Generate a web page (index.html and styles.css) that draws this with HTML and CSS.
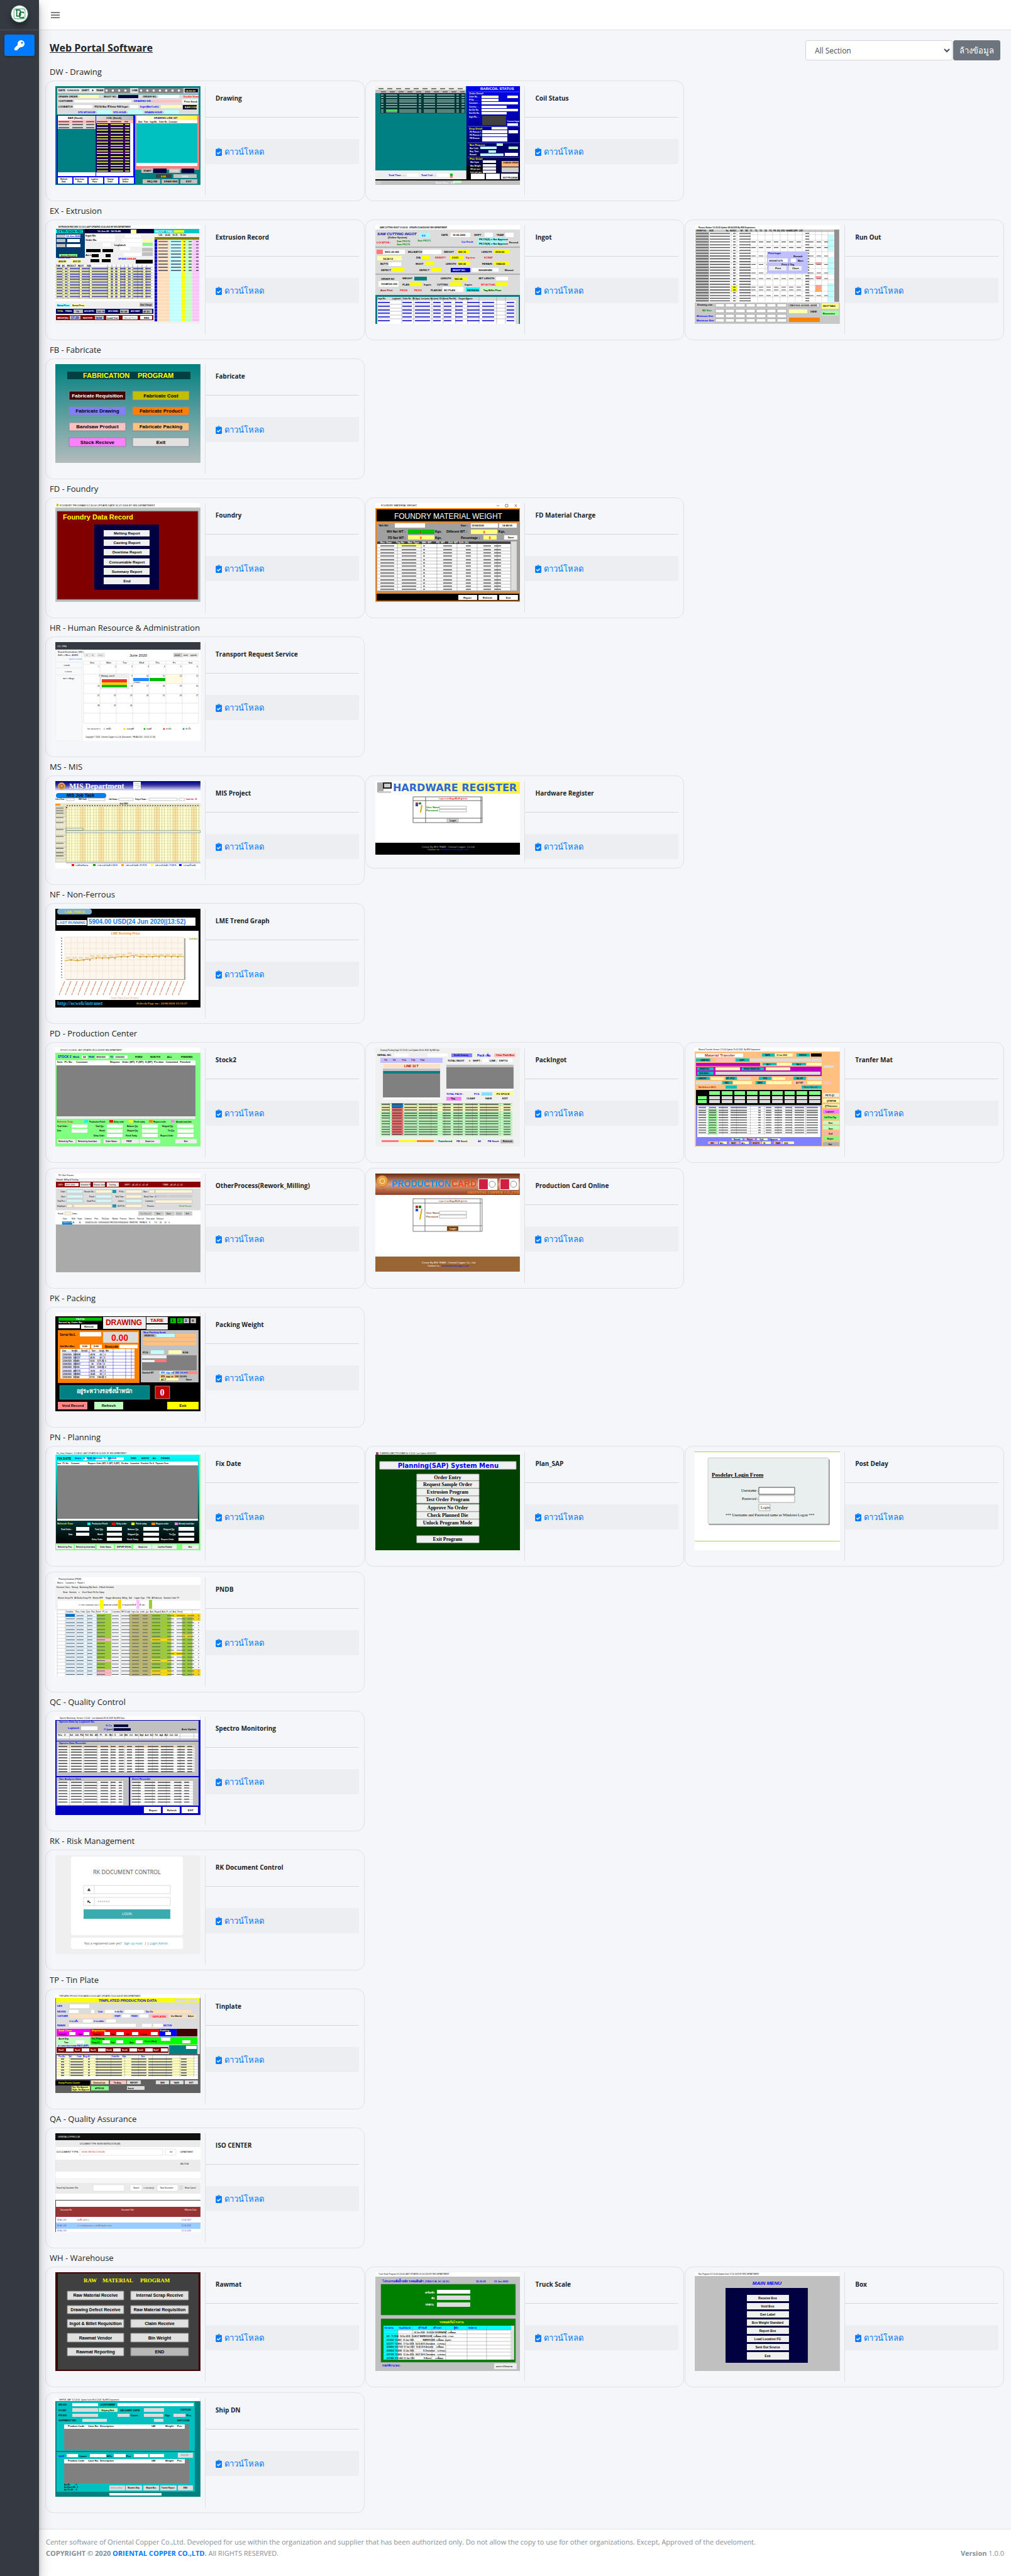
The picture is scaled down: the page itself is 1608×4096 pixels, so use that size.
FILE: index.html
```html
<!DOCTYPE html>
<html lang="th">
<head>
<meta charset="utf-8">
<meta name="viewport" content="width=device-width, initial-scale=1">
<title>Web Portal Software</title>
<link rel="stylesheet" href="styles.css">
</head>
<body>
<svg class="sprite" aria-hidden="true">
  <symbol id="i-clip" viewBox="0 0 384 512"><path fill="currentColor" d="M336 64h-80c0-35.3-28.7-64-64-64s-64 28.7-64 64H48C21.5 64 0 85.5 0 112v352c0 26.5 21.5 48 48 48h288c26.5 0 48-21.5 48-48V112c0-26.5-21.5-48-48-48zM192 40c13.3 0 24 10.7 24 24s-10.7 24-24 24-24-10.7-24-24 10.7-24 24-24zm121.2 231.8l-143 141.8c-4.7 4.7-12.3 4.6-17-.1l-82.6-83.3c-4.7-4.7-4.6-12.3.1-17L99.1 285c4.7-4.7 12.3-4.6 17 .1l46 46.4 106-105.2c4.7-4.7 12.3-4.6 17 .1l28.2 28.4c4.7 4.8 4.6 12.3-.1 17z"/></symbol>
  <linearGradient id="g-fab" x1="0" y1="0" x2="0" y2="1"><stop offset="0" stop-color="#008080"/><stop offset="1" stop-color="#b4bcbc"/></linearGradient>
  <linearGradient id="g-head" x1="0" y1="0" x2="1" y2="0"><stop offset="0" stop-color="#fff"/><stop offset="1" stop-color="#b8b8b8"/></linearGradient>
  <linearGradient id="g-yel" x1="0" y1="0" x2="1" y2="0"><stop offset="0" stop-color="#fff"/><stop offset="1" stop-color="#fff040"/></linearGradient>
  <linearGradient id="g-mis" x1="0" y1="0" x2="0" y2="1"><stop offset="0" stop-color="#00007c"/><stop offset=".4" stop-color="#3030a0"/><stop offset="1" stop-color="#e8e8ff"/></linearGradient>
  <linearGradient id="g-blue" x1="0" y1="0" x2="0" y2="1"><stop offset="0" stop-color="#0000f0"/><stop offset="1" stop-color="#000028"/></linearGradient>
  <linearGradient id="g-fix" x1="0" y1="0" x2="0" y2="1"><stop offset="0" stop-color="#00ffff"/><stop offset=".8" stop-color="#002828"/><stop offset="1" stop-color="#000"/></linearGradient>
  <linearGradient id="g-brown" x1="0" y1="0" x2="0" y2="1"><stop offset="0" stop-color="#6a2810"/><stop offset=".5" stop-color="#e0a080"/><stop offset="1" stop-color="#8c4020"/></linearGradient>
  <pattern id="p-gantt" width="29.5" height="4.5" patternUnits="userSpaceOnUse"><path fill="#ffffd0" d="M0 0h30v5H0z"/><path fill="#ffe8a8" d="M10 0h8v5h-8z"/><path fill="none" stroke="#b0a878" stroke-width=".5" d="M0 0h30M2 0v5M6 0v5M10 0v5M14 0v5M18 0v5M22 0v5M26 0v5"/></pattern>
  <pattern id="p-table" width="22" height="4.4" patternUnits="userSpaceOnUse"><path fill="none" stroke="#777" stroke-width=".7" d="M0 0h22M0 0v5"/></pattern>
</svg>

<aside class="sidebar">
  <a class="brand" href="#" aria-label="OC">
    <svg viewBox="0 0 32 32"><circle cx="16" cy="16" r="15.5" fill="#fff" stroke="#2e8b57" stroke-width="1"/><rect x="6" y="7" width="20" height="18" rx="3" fill="none" stroke="#5aa67c" stroke-width="1.2"/><path fill="none" stroke="#14733d" stroke-width="2" d="M9 9h5q4 0 4 4v4q0 3-4 3h-3V9M23 15v-2h-4q-3 0-3 3v4q0 3 3 3h4v-2"/></svg>
  </a>
  <nav class="side-nav"><a class="side-link" href="#" aria-label="Web Portal">
    <svg viewBox="0 0 512 512"><path fill="currentColor" d="M512 176c0 97.2-78.8 176-176 176-11.2 0-22.2-1.1-32.8-3.1l-24 27a24 24 0 0 1-18 8.100H224v40c0 13.300-10.700 24-24 24h-40v40c0 13.300-10.700 24-24 24H24c-13.300 0-24-10.700-24-24v-78.100c0-6.400 2.500-12.500 7-17l161.800-161.800C163.100 213.800 160 195.300 160 176 160 78.800 238.800 0 336 0c97.500 0 176 78.500 176 176zM336 128c0 26.500 21.500 48 48 48s48-21.500 48-48-21.500-48-48-48-48 21.500-48 48z"/></svg>
  </a></nav>
</aside>

<div class="page">
<header class="topbar">
  <button class="menu-btn" type="button" aria-label="Menu"><svg viewBox="0 0 14 12"><path fill="currentColor" d="M0 1h14v2H0zM0 5h14v2H0zM0 9h14v2H0z"/></svg></button>
</header>

<main class="content">
<div class="toolbar">
  <h1>Web Portal Software</h1>
  <form class="filter"><select aria-label="Section"><option>All Section</option></select><button type="button">ล้างข้อมูล</button></form>
</div>

<section><h2>DW - Drawing</h2><div class="cards">
<article class="app-card"><div class="thumb"><svg viewBox="0 0 231 157">
<path fill="#008080" d="M0 0h231v157H0z"/><path fill="#dcdcdc" d="M3 3h225v9H3zM3 13h225v32H3z"/>
<path fill="#808080" d="M78 3h41v8H78zM132 3h72v8h-72z"/><path fill="#fff" d="M17 4h23v5H17zM55 4h9v5h-9zM163 14h34v5h-34zM29 22h92v4H29zM29 30h30v5H29zM118 30h14v5h-14zM202 21h25v7h-25z"/>
<path fill="#ffffb0" d="M36 14h33v5H36zM168 30h34v5h-34z"/><path fill="#000040" d="M100 14h32v5h-32zM203 30h22v7h-22zM206 4h21v6h-21z"/><path fill="#ffc0c0" d="M153 22h47v4h-47z"/><path fill="#c0ffff" d="M66 38h24v6H66zM115 38h24v6h-24zM173 38h24v6h-24z"/>
<path stroke="#fff" stroke-width="3" stroke-dasharray="3 7" d="M80 7h38M135 7h67"/>
<text x="5" y="8">DATE</text><text x="18" y="8">12/06/2020</text><text x="42" y="8">SHIFT</text><text x="58" y="8">A</text><text x="65" y="8">TEAM</text><text x="122" y="8">LINE</text><text x="207" y="9" fill="#ff0">14:00:20</text>
<text x="5" y="18">DRAWN ORDER :</text><text x="77" y="18">INGOT NO. :</text><text x="139" y="18">ORDER NO. :</text><text x="204" y="18" fill="red">Double Draw</text><text x="5" y="25">CUSTOMER :</text><text x="125" y="25" fill="#00f">DRAWING DIE :</text><text x="205" y="26">Print Stock</text><text x="5" y="34">LOGBATCH</text><text x="62" y="34">จำนวน Bar ที่ Draw ของ Ingot :</text><text x="135" y="34" fill="#00f">Ingot(BarCode):</text><text x="206" y="35" fill="#ff0">BARCODE</text><text x="36" y="43" fill="#00f">STD MT/HOUR :</text><text x="92" y="43" fill="#00f">STD HOUR :</text><text x="142" y="43" fill="#00f">DRAWN HOUR :</text>
<path fill="#00f" d="M2 46h125v110H2z"/><path fill="#008080" d="M4 47h60v91H4z"/><path fill="url(#g-head)" d="M4 47h60v7H4zM65 47h59v7H65z"/><path fill="#ffc0c0" d="M4 54h60v5H4zM65 54h59v5H65z"/><path fill="#dcdcdc" d="M4 59h60v9H4z"/><path fill="#000040" d="M65 59h54v78H65z"/><path fill="#fff" d="M119 59h5v78h-5zM4 137h60v6H4zM65 137h59v6H65zM4 145h23v10H4zM29 145h22v10H29zM53 145h23v10H53zM78 145h22v10H78zM102 145h23v10h-23z"/>
<path stroke="#c8c850" stroke-width="2" stroke-dasharray="18 4 20 3 8 2" d="M66 61h52M66 66h52M66 70h52M66 75h52M66 80h52M66 84h52M66 89h52M66 94h52M66 98h52M66 103h52M66 107h52M66 112h52M66 117h52M66 121h52M66 126h52M66 130h52M66 135h52"/><path stroke="#800080" stroke-width=".7" d="M65 63.500h54M65 68.500h54M65 77.500h54M65 86.500h54M65 96.500h54M65 105.500h54M65 114.500h54M65 123.500h54M87 59v78M110 59v78"/>
<path stroke="#444" stroke-width="1.500" stroke-dasharray="17 5" d="M5 61h57M5 66h57M5 56.500h57M66 56.500h50"/><text x="20" y="52">BAR (Stock)</text><text x="81" y="52">COIL (Stock)</text>
<text class="t3" x="8" y="149">Refresh</text><text class="t3" x="10" y="153">Data</text><text class="t3" x="31" y="149">Draw from</text><text class="t3" x="35" y="153">Floor</text><text class="t3" x="57" y="149">Load to</text><text class="t3" x="59" y="153">Floor</text><text class="t3" x="82" y="149">Change</text><text class="t3" x="83" y="153">Order</text><text class="t3" x="106" y="149">Load to</text><text class="t3" x="107" y="153">Defect</text>
<path fill="#f88080" d="M127 46h102v87H127z"/><path fill="url(#g-yel)" d="M129 47h97v7h-97z"/><path fill="#fff" d="M129 54h97v5h-97zM129 122h97v5h-97z"/><path fill="#00c0c0" d="M129 59h97v63h-97z"/><text x="157" y="52" fill="#00a">DRAWING LINE 30T</text><text class="t3" x="132" y="58">Date   Time   IngotNo    Order No   Customer</text>
<path fill="#c0c0c0" d="M137 131h18v7h-18zM181 131h18v7h-18zM188 140h37v6h-37zM139 148h28v7h-28zM169 148h27v7h-27zM199 148h27v7h-27z"/><path fill="#000040" d="M156 131h21v7h-21zM201 131h20v7h-20z"/><path fill="#404040" d="M160 140h25v6h-25z"/><text x="140" y="136">START</text><text x="183" y="136" fill="#eee">FINISH</text><text x="168" y="145" fill="#ff0">0.00</text><text x="201" y="145" fill="#eee">SAVE</text><text x="146" y="153">REQ DIE</text><text x="173" y="153">DRAW END</text><text x="208" y="153">EXIT</text>
</svg></div><div class="info"><h3>Drawing</h3><a class="download" href="#"><svg><use href="#i-clip"/></svg>ดาวน์โหลด</a></div></article>

<article class="app-card"><div class="thumb"><svg viewBox="0 0 231 157">
<path fill="#008080" d="M0 0h231v157H0z"/><path fill="#f0f0e8" d="M0 0h144v6H0z"/><path fill="#c0c0c0" d="M0 6h144v5H0zM0 150h231v7H0z"/><path fill="#eee" d="M0 134h145v14H0z"/><path fill="#003838" d="M8 11h135v32H8z"/><path fill="#00e000" d="M17 37h18v3H17z"/>
<path stroke="#a8c8c0" stroke-width="1.500" stroke-dasharray="4 4 18 3 28 3" d="M9 14h133M9 18h133M9 22h133M9 25h133M9 29h133M9 33h133M9 38h133M9 41h133"/><path stroke="#555" stroke-width="1.500" stroke-dasharray="8 6" d="M5 4h137M9 9h133"/>
<path fill="url(#g-blue)" d="M145 0h86v150h-86z"/><path fill="#000" d="M145 127h26v23h-26zM0 148h231v2H0z"/><text class="t6" x="167" y="6" fill="#fff">BAR/COIL STATUS</text><path stroke="#88f" stroke-width=".7" d="M147 9h82M147 64h82M147 90h82M147 113h82"/>
<path fill="#ffffb0" d="M169 15h27v4h-27zM210 15h17v4h-17z"/><path fill="#fff" d="M169 20h27v4h-27zM169 25h58v4h-58zM169 31h40v4h-40zM169 36h58v4h-58zM169 41h40v4h-40zM210 59h17v4h-17zM185 65h25v4h-25zM170 70h40v5h-40zM170 76h40v4h-40zM170 81h40v7h-40zM212 70h15v5h-15zM206 106h21v5h-21zM171 118h21v4h-21zM171 124h21v4h-21zM171 129h21v4h-21zM171 134h21v4h-21zM152 139h22v9h-22zM176 139h22v9h-22zM200 139h27v9h-27z"/><path fill="#c0ffff" d="M167 96h26v4h-26zM180 102h12v4h-12zM167 107h37v4h-37z"/><path fill="#c0ffc0" d="M193 91h10v4h-10zM212 96h15v4h-15zM124 150h13v4h-13z"/><path fill="#404040" d="M170 47h38v15h-38z"/><path fill="#ffb878" d="M201 119h27v9h-27z"/><path fill="#ccc" d="M201 129h27v8h-27zM1 151h8v5H1z"/>
<g fill="#ff0"><text x="149" y="13">Order Detail</text><text x="149" y="69">Drop Detail</text><text x="150" y="95">Box Request</text><text x="150" y="117">Plan Detail</text></g><g class="t3" fill="#fff"><text x="149" y="18">Order No. . .</text><text x="149" y="23">PI No. . . . .</text><text x="149" y="28">Customer . .</text><text x="149" y="34">Country . . .</text><text x="149" y="39">Ext Die No.</text><text x="149" y="44">Drw Die No.</text><text x="149" y="50">Ingot No. . .</text><text x="210" y="57">Current Ingot</text><text x="150" y="74">PO Reason 1</text><text x="150" y="79">PO Reason 2</text><text x="150" y="84">PN Reason</text><text x="150" y="100">Box Code</text><text x="150" y="105">Req. Time</text><text x="150" y="110">Remark</text><text x="151" y="122">Max Input</text><text x="151" y="128">Max Weight</text><text x="151" y="133">Sill per pcs</text><text x="151" y="138">Less per pcs</text></g>
<path fill="#fff" d="M50 139h19v5H50zM98 139h19v5H98z"/><path fill="#00c000" d="M119 139h4v4h-4z"/><path fill="#f77" d="M119 143h4v3h-4z"/><text x="21" y="143" fill="#00f">Total Time . . . .</text><text x="73" y="143" fill="#00f">Total Coil . . .</text><text class="t3" x="203" y="123">CHANGE ORDER</text><text class="t3" x="203" y="147">EXIT PROGRAM</text><text class="t3" x="96" y="155" fill="#fff">Electric Hours . . 0.00</text>
</svg></div><div class="info"><h3>Coil Status</h3><a class="download" href="#"><svg><use href="#i-clip"/></svg>ดาวน์โหลด</a></div></article>
</div></section>

<section><h2>EX - Extrusion</h2><div class="cards">
<article class="app-card"><div class="thumb"><svg viewBox="0 0 231 157">
<path fill="#f0f0f0" d="M0 0h231v157H0z"/><path fill="#fff" d="M0 0h231v6H0z"/><text class="t3" x="5" y="4">EXTRUSION RECORD V.2.10.0 LAST UPDATED 03-06-2020 BY MIS DEPARTMENT</text>
<path fill="#003c70" d="M1 6h46v46H1z"/><path fill="#0ff" d="M1 7h43v6H1z"/><path fill="#000040" d="M47 6h110v7H47z"/><path fill="#00c8c8" d="M157 6h72v7h-72z"/><path fill="#c0c0c0" d="M2 15h14v5H2zM2 22h14v5H2zM2 30h14v5H2zM138 36h17v6h-17zM138 43h17v6h-17z"/><path fill="#fff" d="M16 15h24v5H16zM19 22h20v5H19zM18 30h22v5H18zM63 15h32v5H63zM63 21h32v5H63zM111 15h25v5h-25zM106 22h32v5h-32zM75 28h13v6H75zM106 28h32v6h-32zM109 44h28v5h-28zM103 35h16v5h-16z"/><path fill="#80ff80" d="M6 46h29v4H6zM139 28h16v5h-16z"/><path fill="#ffffa0" d="M4 54h16v6H4zM26 54h16v6H26zM139 22h16v5h-16zM120 7h9v6h-9z"/><path fill="#000" d="M49 38h23v5H49zM75 38h17v5H75zM58 46h11v5H58zM80 46h8v5h-8zM56 54h14v5H56zM74 54h14v5H74zM128 55h27v6h-27z"/>
<text class="t5" x="3" y="12">EXTRUSION RECORD</text><text x="67" y="11" fill="#fff">12-Jun-20</text><text x="88" y="11" fill="#fff">14:15:40</text><text class="t5" x="158" y="12" fill="#fff">INGOT TABLE</text><text x="17" y="19" fill="#00f">12-Jun-2020</text><text x="9" y="50" fill="red">Auto Record</text><text x="48" y="18">Ingot No.</text><text x="48" y="25">Order No.</text><text x="94" y="33">Logbatch</text><text x="48" y="49">Act Len.</text><text x="4" y="53" class="t3" fill="#00f">Extrude Ratio</text><text x="100" y="55" fill="#00f">SPEED</text><text x="114" y="55" fill="red">SWEAR</text><text x="5" y="59">404.80</text><text x="28" y="59">423.55</text>
<path fill="#fff" d="M0 63h156v58H0z"/><path fill="#ffffb8" d="M1 67h152v50H1z"/><path fill="none" stroke="#668" stroke-width=".6" d="M0 67h155M0 71h155M0 76h155M0 80h155M0 84h155M0 88h155M0 93h155M0 97h155M0 102h155M0 106h155M0 111h155M0 116h155M12 63v54M20 63v54M38 63v54M54 63v54M83 63v54M90 63v54M97 63v54M104 63v54M110 63v54M116 63v54M123 63v54M131 63v54M138 63v54M145 63v54"/><path stroke="#33a" stroke-width="1.600" stroke-dasharray="9 4 4 4 16 3 13 3 26 4 4 3 4 4" d="M2 69h150M2 73.500h150M2 78h150M2 82h150M2 86h150M2 90.500h150M2 95h150M2 99.500h150M2 104h150M2 108.500h150M2 113.500h150"/><text class="t3" x="1" y="66">TIME   NO.   PRODUCT   INGOT      SIZE</text>
<path fill="#000060" d="M1 133h155v8H1z"/><path fill="#800000" d="M1 143h155v8H1z"/><path fill="#c0c0c0" d="M29 134h15v6H29zM65 134h14v6H65zM103 134h14v6h-14zM139 134h15v6h-15zM23 144h17v6H23zM63 144h14v6H63zM134 123h21v7h-21z"/><path fill="#fff" d="M81 144h20v6H81zM107 144h24v6h-24zM135 144h19v6h-19z"/><path fill="#a0ffff" d="M2 125h22v5H2z"/><path fill="#ffffb8" d="M26 125h23v5H26z"/><text x="3" y="129" class="t3" fill="#00a">Manual Press</text><text x="27" y="129" class="t3">Normal Press</text><text x="3" y="138" class="t3" fill="#ff0">TOTAL</text><text x="16" y="138" class="t3" fill="#fff">PRESS:</text><text x="33" y="139" fill="#00a">79</text><text x="46" y="138" class="t3" fill="#fff">AVG EXTR:</text><text x="66" y="139" fill="#00a">105.78</text><text x="84" y="138" class="t3" fill="#fff">AVG DEAD:</text><text x="104" y="139">91.38</text><text x="120" y="138" class="t3" fill="#fff">AVG WAIT:</text><text x="140" y="139">47.51</text><text x="3" y="149" class="t3" fill="#fff">WEIGHT(Mt):</text><text class="t5" x="25" y="149" fill="#00a">17.20</text><text x="44" y="149" class="t3" fill="#fff">INGOT/HR:</text><text x="64" y="149" fill="#00a">14.84</text><text x="82" y="149">Load Out</text><text x="110" y="149" class="t3" fill="#999">Manual Press</text><text x="141" y="149">END</text><text x="135" y="128" class="t3">Gear Change</text>
<path fill="#ffdcb8" d="M162 19h20v134h-20z"/><path fill="#c0ffff" d="M182 19h19v134h-19z"/><path fill="#ff0" d="M201 19h6v134h-6zM189 8h16v4h-16z"/><path fill="#c0ffc0" d="M207 19h11v134h-11z"/><path fill="#ffc0ff" d="M218 19h11v134h-11z"/><path fill="#00c" d="M158 23h4v130h-4z"/><path fill="#808000" d="M158 19h71v4h-71z"/><path stroke="#fff" stroke-width=".5" d="M158 28h71M158 34h71M158 39h71M158 44h71M158 49h71M158 54h71M158 60h71M158 65h71M158 70h71M158 75h71M158 80h71M158 86h71M158 91h71M158 96h71M158 101h71M158 107h71M158 112h71M158 117h71M158 122h71M158 128h71M158 133h71M158 138h71M158 143h71M158 148h71"/><path stroke="#446" stroke-width="1.300" stroke-dasharray="15 5 16 4 3 5 5 7 5 5" d="M164 26h64M164 31h64M164 36h64M164 41h64M164 46h64M164 51h64M164 57h64M164 62h64M164 67h64M164 72h64"/><text class="t3" x="164" y="17">1-25      26-50     51-75     76-100</text>
</svg></div><div class="info"><h3>Extrusion Record</h3><a class="download" href="#"><svg><use href="#i-clip"/></svg>ดาวน์โหลด</a></div></article>

<article class="app-card"><div class="thumb"><svg viewBox="0 0 231 157">
<path fill="#dcdcdc" d="M0 0h231v157H0z"/><path fill="#fff" d="M0 0h231v7H0z"/><text class="t3" x="7" y="5">SAW CUTTING INGOT V.2.60.00   UPDATE 21/04/2020 BY MIS DEPARTMENT</text><path stroke="#888" d="M0 35h231M0 78h231"/>
<text class="t6 it" x="3" y="16" fill="#00a">SAW CUTTING INGOT</text><text x="20" y="21">(Online System)</text><text x="2" y="29" fill="red">LOCATION :</text><text x="34" y="27" fill="#080">Saw PK170</text><text x="67" y="26" fill="#080">Saw PK171</text><text x="34" y="32" fill="#080">Saw PK172</text>
<path fill="#a0ffff" d="M70 12h17v8H70zM163 20h45v5h-45zM163 27h45v5h-45z"/><path fill="#fff" d="M120 12h31v7h-31zM174 12h13v7h-13zM207 12h13v7h-13zM75 39h30v7H75zM21 59h20v6H21zM154 68h42v6h-42zM192 82h19v6h-19zM107 98h33v8h-33zM5 89h32v9H5z"/><path fill="#ff0" d="M130 39h20v6h-20zM189 39h24v6h-24zM74 48h13v6H74zM118 48h23v6h-23zM79 57h15v6H79zM130 57h21v6h-21zM189 57h24v6h-24zM27 68h19v6H27zM89 68h16v6H89zM124 82h23v6h-23zM55 91h19v6H55zM119 91h19v6h-19zM192 91h19v6h-19z"/><path fill="#f77" d="M2 39h10v7H2z"/><path fill="#fff" d="M12 39h35v7H12z"/><path fill="#ffffb0" d="M3 49h39v7H3z"/><path fill="#008080" d="M62 82h20v6H62z"/><path fill="#0000b0" d="M120 68h31v7h-31z"/><path fill="#0ff" d="M144 99h22v7h-22z"/><path fill="#c0ffc0" d="M169 98h33v8h-33z"/>
<text x="74" y="18" fill="#00f">0.0</text><text x="105" y="17">DATE</text><text x="123" y="17">12-06-2020</text><text x="157" y="17">SHIFT</text><text x="193" y="17">TEAM</text><text x="137" y="28" fill="#00f">Cut Fresh</text><text x="165" y="24">PK170(D) = Not Approve</text><text x="165" y="31">PK170(N) = Not Approve</text><text x="213" y="29">Resend</text><text x="15" y="44">S011-62-092</text><text x="52" y="44">BILLBATCH</text><text x="109" y="44">WEIGHT</text><text x="132" y="44">666.10</text><text x="169" y="44">LENGTH</text><text x="191" y="44">2530.00</text><text x="12" y="55">14:24:13</text><text x="65" y="53">DIA.</text><text x="95" y="53" fill="red">DENSITY</text><text x="122" y="53">2.633</text><text x="144" y="53" fill="red">Kgs/cm.</text><text x="173" y="53" fill="red">SCRAP</text><text x="8" y="63">BUTT1</text><text x="64" y="63">INGOT</text><text x="112" y="63">LENGTH</text><text x="132" y="63">506.00</text><text x="170" y="63">REMAIN</text><text x="192" y="63">1944.00</text><text x="9" y="73">DEFECT</text><text x="70" y="73">DEFECT</text><text x="123" y="73" fill="#fff">INGOT NO.</text><text x="164" y="73">2060493492</text><text x="206" y="73">Manual</text><text x="9" y="87">ORDER NO</text><text x="9" y="95">10149100-100</text><text x="43" y="86">WEIGHT</text><text x="104" y="86">LENGTH</text><text x="126" y="87">505.64</text><text x="164" y="86">SET LENGTH</text><text x="43" y="96">PLAN</text><text x="77" y="96">Ingots</text><text x="98" y="96">CUTTING</text><text x="142" y="96">Ingots</text><text x="168" y="96" fill="red">WT ACTUAL</text><text x="8" y="105" fill="#800000">Auto Print</text><text x="39" y="105" fill="red">PK230</text><text x="62" y="105" fill="red">PK231</text><text x="88" y="105">PLAN NO</text><text x="109" y="105">NO PLAN</text><text x="146" y="105">REFRESH</text><text x="172" y="105">Tag Billet Floor</text>
<path fill="#008080" d="M0 111h231v46H0z"/><path fill="#fff" d="M3 114h225v43H3z"/><path fill="#d8d8d8" d="M3 114h225v6H3zM223 114h5v43h-5z"/><path stroke="#99a" stroke-width=".6" d="M3 126h220M3 132h220M3 137h220M3 143h220M3 149h220M42 114v43M61 114v43M90 114v43M108 114v43M128 114v43M147 114v43M165 114v43M193 114v43M207 114v43"/><path stroke="#22c" stroke-width="1.800" stroke-dasharray="19 20 15 5 24 5 12 5 12 6 12 7 20 4" d="M4 123h217M4 129h217M4 135h217M4 140h217M4 146h217M4 152h217"/><text class="t3" x="4" y="118">Ingot No             Logbatch    Order No   Wt.(kgs)  Len.(mm)  Act.(mm)  R.Lft(mm) Plan No.    Oxygen Approv</text>
</svg></div><div class="info"><h3>Ingot</h3><a class="download" href="#"><svg><use href="#i-clip"/></svg>ดาวน์โหลด</a></div></article>

<article class="app-card"><div class="thumb"><svg viewBox="0 0 231 157">
<path fill="#fff" d="M0 0h231v157H0z"/><text class="t3" x="6" y="5">Runout Station V.2.20.00 Update 08-04-2020 By MIS Department.</text><path fill="#c8c8c8" d="M1 7h22v115H1zM0 123h231v34H0zM1 7h221v4H1z"/><path fill="#909090" d="M222 7h8v115h-8z"/><path fill="#c0ffff" d="M212 16h9v25h-9zM212 52h9v25h-9zM212 92h9v30h-9z"/><path fill="#ff0" d="M58 97h9v9h-9z"/><path fill="#ffa0a0" d="M192 59h10v4h-10zM192 81h10v4h-10zM192 95h10v6h-10z"/><path fill="#ffb050" d="M192 101h10v5h-10z"/>
<path fill="none" stroke="#aaa" stroke-width=".4" d="M58 7v115M67 7v115M88 7v115M100 7v115M112 7v115M124 7v115M136 7v115M148 7v115M160 7v115M171 7v115M182 7v115M192 7v115M202 7v115M212 7v115M0 15h222M0 24h222M0 33h222M0 42h222M0 51h222M0 60h222M0 69h222M0 78h222M0 87h222M0 96h222M0 105h222M0 114h222"/>
<path stroke="#444" stroke-width="1.300" stroke-dasharray="20 2 32 5 4 6 18 87 6 40 2 9" d="M2 13h219M2 17.500h219M2 22h219M2 26.500h219M2 31h219M2 35.500h219M2 40h219M2 44.500h219M2 49h219M2 53.500h219M2 58h219M2 62.500h219M2 67h219M2 71.500h219M2 76h219M2 80.500h219M2 85h219M2 89.500h219M2 94h219M2 98.500h219M2 103h219M2 107.500h219M2 112h219M2 116.500h219M2 120.500h219"/><path stroke="#555" stroke-width="1.200" stroke-dasharray="7 5" d="M90 26.500h79M182 26.500h30M90 35.500h79M182 35.500h30M90 49h25M182 49h30M90 62.500h25M182 62.500h30M90 76h25M182 76h30M90 85h79M182 85h30M90 98.500h79M90 103h79M90 112h79M182 112h30"/>
<text class="t3" x="2" y="10">ORDER NO.     SIZE                        No.  INGNO        W1    W2    T1     T2     T3     T4     T5    PK_KG  STD  %HARD DIFF.  CNT</text>
<path fill="#c0c0ff" d="M115 42h65v35h-65z"/><path fill="#fff" d="M117 53h31v6h-31zM153 53h8v6h-8z"/><path fill="#eee" d="M118 65h28v7h-28zM150 65h20v7h-20z"/><text x="117" y="46" fill="#00a">Print Ingot</text><text x="157" y="51">Remark</text><text x="118" y="58">2060421075</text><text x="164" y="58">Bars</text><text x="138" y="64">Print 3 Tag</text><text x="128" y="70">Print</text><text x="155" y="70">Close</text>
<path fill="#fff" stroke="#777" stroke-width=".5" d="M33 125h14v5H33zM49 125h14v5H49zM65 125h15v5H65zM82 125h14v5H82zM98 125h15v5H98zM115 125h14v5h-14zM131 125h15v5h-15zM33 134h14v5H33zM49 134h14v5H49zM65 134h15v5H65zM82 134h14v5H82zM98 134h15v5H98zM115 134h14v5h-14zM131 134h15v5h-15zM33 142h14v5H33zM49 142h14v5H49zM65 142h15v5H65zM82 142h14v5H82zM98 142h15v5H98zM115 142h14v5h-14zM131 142h15v5h-15zM33 149h14v5H33zM49 149h14v5H49zM65 149h15v5H65zM82 149h14v5H82zM98 149h15v5H98zM115 149h14v5h-14zM131 149h15v5h-15zM150 125h48v5h-48z"/><path fill="#ffff80" d="M202 124h27v9h-27z"/><path fill="#a0ffa0" d="M202 136h27v8h-27z"/><path fill="#ff8000" d="M150 147h49v7h-49z"/><path fill="#ffffb0" d="M150 134h29v6h-29z"/><text x="4" y="128">Drawing size</text><text x="12" y="137" fill="#080">BD Size</text><text x="3" y="146" fill="#00f">Minimum Size</text><text x="3" y="153" fill="#00f">Maximum Size</text><text x="151" y="129">DB01000-003005-00085</text><text x="204" y="130" class="t3">INGOT TABLE</text><text x="184" y="139">VIEW</text><text x="204" y="142" class="t3">Measurement</text>
</svg></div><div class="info"><h3>Run Out</h3><a class="download" href="#"><svg><use href="#i-clip"/></svg>ดาวน์โหลด</a></div></article>
</div></section>

<section><h2>FB - Fabricate</h2><div class="cards">
<article class="app-card"><div class="thumb"><svg viewBox="0 0 231 157">
<path fill="url(#g-fab)" d="M0 0h231v157H0z"/><path fill="#004040" d="M19 12h196v12H19z"/><text class="t11" x="44" y="22" fill="#ff0">FABRICATION</text><text class="t11" x="131" y="22" fill="#ff0">PROGRAM</text>
<g stroke="#889" stroke-width="1"><path fill="#400000" d="M22 43h90v14H22z"/><path fill="#c0c000" d="M123 43h90v14h-90z"/><path fill="#8080ff" d="M22 68h90v13H22z"/><path fill="#ff8000" d="M123 68h90v13h-90z"/><path fill="#ffc0c0" d="M22 93h90v13H22z"/><path fill="#ffc080" d="M123 93h90v13h-90z"/><path fill="#ff80ff" d="M22 117h90v14H22z"/><path fill="#e0e0e0" d="M123 117h90v14h-90z"/></g>
<g class="t8 mid"><text x="67" y="53" fill="#fff">Fabricate Requisition</text><text x="168" y="53">Fabricate Cost</text><text x="67" y="77">Fabricate Drawing</text><text x="168" y="77">Fabricate Product</text><text x="67" y="102">Bandsaw Product</text><text x="168" y="102">Fabricate Packing</text><text x="67" y="127">Stock Recieve</text><text x="168" y="127">Exit</text></g>
</svg></div><div class="info"><h3>Fabricate</h3><a class="download" href="#"><svg><use href="#i-clip"/></svg>ดาวน์โหลด</a></div></article>
</div></section>

<section><h2>FD - Foundry</h2><div class="cards">
<article class="app-card"><div class="thumb"><svg viewBox="0 0 231 157">
<path fill="#c0c0c0" d="M0 0h231v157H0z"/><path fill="#fff" d="M0 0h231v7H0z"/><path fill="#c0c000" d="M2 1h3v4H2z"/><text x="7" y="5" class="reg">FOUNDRY PROGRAM V.2.30.00 UPDATE DATE 31-07-2006 BY MIS DEPARTMENT</text><path fill="#800000" stroke="#555" d="M3 13h224v140H3z"/><text class="t11" x="12" y="26" fill="#ff0">Foundry Data Record</text><path fill="#000040" d="M62 34h103v104H62z"/>
<path fill="#f0f0f0" d="M77 43h73v10H77zM77 58h73v10H77zM77 73h73v10H77zM77 88h73v11H77zM77 103h73v11H77zM77 118h73v11H77z"/><g class="t6 mid"><text x="114" y="50">Melting Report</text><text x="114" y="65">Casting Report</text><text x="114" y="80">Overtime Report</text><text x="114" y="96">Consumable Report</text><text x="114" y="111">Summary Report</text><text x="114" y="126">End</text></g>
</svg></div><div class="info"><h3>Foundry</h3><a class="download" href="#"><svg><use href="#i-clip"/></svg>ดาวน์โหลด</a></div></article>

<article class="app-card"><div class="thumb"><svg viewBox="0 0 231 157">
<path fill="#fff" d="M0 0h231v8H0z"/><text class="reg" x="9" y="5">FOUNDRY MATERIAL WEIGHT</text><path fill="none" stroke="#333" stroke-width=".6" d="M193 4h4M207 2h4v4h-4zM222 2l3 4M225 2l-3 4"/><path fill="#ff8000" d="M0 8h231v149H0z"/><path fill="#000" d="M2 10h227v19H2zM2 144h227v11H2z"/><path fill="#a0a0a0" d="M2 31h227v111H2z"/><text class="t12 reg mid" x="116" y="25" fill="#fff">FOUNDRY MATERIAL WEIGHT</text>
<path fill="#fff" d="M31 32h48v7H31zM152 32h43v7h-43zM197 32h28v7h-28zM205 51h21v7h-21zM3 65h212v74H3zM132 146h30v8h-30zM164 146h30v8h-30zM197 146h30v8h-30z"/><path fill="#00c000" d="M52 42h42v7H52z"/><path fill="#ffff80" d="M52 51h42v7H52zM152 42h42v7h-42zM172 51h21v7h-21zM35 65h38v4H35z"/><path fill="#444" d="M3 61h212v4H3z"/><path fill="#ddd" d="M216 61h9v78h-9z"/>
<text x="5" y="37">TAG NO:</text><text x="136" y="37">Date :</text><text x="153" y="37">12/06/2020</text><text x="202" y="37">14:48:05</text><text class="t5" x="18" y="47">WH Net WT :</text><text class="t5" x="95" y="47">Kgs.</text><text class="t5" x="113" y="47">Different WT :</text><text class="t5" x="196" y="47">Kgs.</text><text class="t5" x="20" y="57">FD Net WT :</text><text class="t5" x="95" y="57">Kgs.</text><text class="t5" x="136" y="57">Percentage :</text><g class="t5" fill="red"><text x="71" y="48">0</text><text x="71" y="57">0</text><text x="172" y="48">0</text><text x="181" y="57">0</text></g><text x="211" y="56">Save</text><text x="8" y="64" fill="#fff">Rec. Date      Tag No     Mat. Type    WH. WT       FD. WT     Diff. WT  Diff. (%)</text>
<path stroke="#777" stroke-width=".5" d="M3 71h212M3 76h212M3 81h212M3 87h212M3 92h212M3 97h212M3 103h212M3 108h212M3 113h212M3 119h212M3 124h212M3 129h212M3 134h212M35 65v74M73 65v74M98 65v74M130 65v74M162 65v74M194 65v74"/><path stroke="#555" stroke-width="1.500" stroke-dasharray="22 12 23 11 3 29 14 22 8 20 12 5 11 20" d="M8 68h206M8 74h206M8 79h206M8 84h206M8 90h206M8 95h206M8 100h206M8 106h206M8 111h206M8 116h206M8 122h206M8 127h206M8 132h206M8 137h206"/><text x="140" y="152">Report</text><text x="171" y="152">Refresh</text><text x="208" y="152">Exit</text>
</svg></div><div class="info"><h3>FD Material Charge</h3><a class="download" href="#"><svg><use href="#i-clip"/></svg>ดาวน์โหลด</a></div></article>
</div></section>

<section><h2>HR - Human Resource &amp; Administration</h2><div class="cards">
<article class="app-card"><div class="thumb"><svg class="reg" viewBox="0 0 231 157">
<path fill="#fff" d="M0 0h231v157H0z"/><path fill="#343a40" d="M0 0h231v12H0z"/><path fill="#f8f9fa" stroke="#ddd" stroke-width=".5" d="M0 12h42.500v145H0zM0 32h42M0 41h42M0 52h42"/><text x="3" y="8" fill="#fff">OC-TRS</text><text class="t3" x="4" y="17">Musard Khruehradsnee ( MIS )</text><text class="t3" x="4" y="22">สิทธิ์การใช้งาน : ADMIN</text><text class="t3" x="22" y="28" fill="#07f">ออกจากระบบ</text><text class="t3" x="13" y="38">รถยนต์</text><text class="t3" x="15" y="48">รายงาน</text><text class="t3" x="12" y="59">จัดการข้อมูล</text>
<path fill="#e8e8e8" d="M45 17h19v7H45zM66 17h13v7H66zM202 17h26v7h-26z"/><path fill="#ccc" d="M188 17h14v7h-14z"/><text x="49" y="22">&lt;</text><text x="58" y="22">&gt;</text><text x="68" y="22" class="t3" fill="#999">today</text><text class="t6" x="118" y="23">June 2020</text><text x="190" y="22" class="t3">month</text><text x="204" y="22" class="t3">week</text><text x="215" y="22" class="t3">agenda</text>
<path fill="#fffae0" d="M176 51h26v15h-26z"/><path fill="none" stroke="#ddd" stroke-width=".7" d="M45 30h183v99H45zM45 35h183M45 51h183M45 66h183M45 82h183M45 97h183M45 113h183M71 30v99M97 30v99M123 30v99M149 30v99M176 30v99M202 30v99"/><text x="55" y="34">Sun</text><text x="81" y="34">Mon</text><text x="107" y="34">Tue</text><text x="133" y="34">Wed</text><text x="159" y="34">Thu</text><text x="187" y="34">Fri</text><text x="212" y="34">Sat</text>
<g class="t3"><text x="67" y="40" fill="#aaa">31</text><text x="95" y="40">1</text><text x="121" y="40">2</text><text x="147" y="40">3</text><text x="173" y="40">4</text><text x="199" y="40">5</text><text x="225" y="40">6</text><text x="69" y="55">7</text><text x="121" y="55">9</text><text x="145" y="55">10</text><text x="171" y="55">11</text><text x="198" y="55">12</text><text x="224" y="55">13</text><text x="67" y="71">14</text><text x="120" y="71">16</text><text x="145" y="71">17</text><text x="171" y="71">18</text><text x="198" y="71">19</text><text x="224" y="71">20</text><text x="67" y="86">21</text><text x="93" y="86">22</text><text x="119" y="86">23</text><text x="145" y="86">24</text><text x="171" y="86">25</text><text x="198" y="86">26</text><text x="224" y="86">27</text><text x="67" y="102">28</text><text x="93" y="102">29</text><text x="119" y="102">30</text></g><path fill="#fff" stroke="#bbb" stroke-width=".6" d="M72 51h45v23H72z"/><path fill="#eee" d="M72 51h45v6H72z"/><path fill="#e33" d="M74 59h40v5H74z"/><path fill="#fc0" d="M74 64h40v4H74z"/><path fill="#0b0" d="M74 68h40v4H74zM150 57h25v5h-25z"/><path fill="#28f" d="M124 57h25v5h-25z"/><text class="t3" x="73" y="55">Monday, June 8</text><text class="t3" x="124" y="65">+3 more</text>
<circle cx="78" cy="138" r="1.500" fill="#ccc"/><circle cx="110" cy="138" r="1.500" fill="#fc0"/><circle cx="142" cy="138" r="1.500" fill="#0b0"/><circle cx="173" cy="138" r="1.500" fill="#f33"/><circle cx="204" cy="138" r="1.500" fill="#28f"/><g class="t3"><text x="51" y="139">สถานะเอกสาร</text><text x="81" y="139">บันทึก</text><text x="113" y="139">รออนุมัติ</text><text x="145" y="139">อนุมัติ</text><text x="176" y="139">ยกเลิก</text><text x="207" y="139">สำเร็จ</text></g><text x="48" y="152" class="t3">Copyright © 2020 .Oriental Copper Co.,Ltd. [Document - FM-AD-041 : 1/4 01-12-16]</text>
</svg></div><div class="info"><h3>Transport Request Service</h3><a class="download" href="#"><svg><use href="#i-clip"/></svg>ดาวน์โหลด</a></div></article>
</div></section>

<section><h2>MS - MIS</h2><div class="cards">
<article class="app-card app-card--mid"><div class="thumb"><svg viewBox="0 0 231 139">
<path fill="#fff" d="M0 0h231v139H0z"/><path fill="url(#g-mis)" d="M0 0h231v15H0z"/><circle cx="10" cy="8" r="6" fill="#e0a050"/><circle cx="10" cy="8" r="3" fill="none" stroke="#844"/><path fill="#fff" d="M124 1h12v12h-12z"/><path stroke="#999" stroke-width=".6" d="M126 4h8M126 7h8M130 11l9-5"/><text class="t12 serif" x="22" y="12" fill="#fff">MIS Department</text><rect y="19" width="80" height="8" rx="4" fill="#0080f0" x="1"/><text class="t7" x="18" y="25">MIS Job Task</text>
<g class="t3 serif"><text x="0" y="30">Select Year :</text><text x="37" y="30">MIS Staff</text><text x="85" y="30">Job Status :</text><text x="127" y="30">Project Name :</text><text x="208" y="30" fill="#c03">Total Job : 90</text></g><path fill="none" stroke="#888" stroke-width=".5" d="M18 27h12v4H18zM53 27h26v4H53zM101 27h23v4h-23zM149 27h45v4h-45zM197 27h9v4h-9z"/><path fill="#e8e4c8" d="M0 35h231v6H0z"/><path fill="url(#p-gantt)" d="M17 41h214v88H17z"/><path fill="#ece8d0" stroke="#998" stroke-width=".5" d="M0 41h17v88H0zM0 45h17M0 49h17M0 52h17M0 56h17M0 64h17M0 75h17M0 86h17M0 97h17M0 105h17M0 112h17M0 117h17M0 123h17"/><path stroke="#555" stroke-width="1.200" stroke-dasharray="12 2" d="M1 43h14M1 47h14M1 51h14M1 58h14M1 66h14M1 77h14M1 88h14M1 99h14M1 107h14M1 114h14M1 119h14"/><path stroke="#555" stroke-width="1.300" stroke-dasharray="2 2" d="M18 39h212"/><path fill="#fff" stroke="#575" stroke-width=".7" d="M17 75h27v3H17zM17 79h214v3H17z"/><path fill="#ff9820" d="M0 36h8v3H0z"/><path fill="#c8c8c8" d="M17 128h214v3H17z"/><text class="t3" x="102" y="37">July 2020</text>
<path fill="red" d="M26 132h4v3h-4zM17 41h2v2h-2z"/><path fill="#090" d="M60 132h4v3h-4z"/><path fill="#f90" d="M105 132h4v3h-4z"/><path fill="#ff3" d="M152 132h4v3h-4z"/><path fill="#00f" d="M197 132h4v3h-4z"/><g class="t3" fill="#03c"><text x="32" y="135">= ยังไม่เริ่มงาน</text><text x="67" y="135">= ทำงานไปแล้ว 1-50 %</text><text x="112" y="135">= ทำงานไปแล้ว 51-70 %</text><text x="159" y="135">= ทำงานไปแล้ว 71-99 %</text><text x="204" y="135">= งานเสร็จแล้ว</text></g>
</svg></div><div class="info"><h3>MIS Project</h3><a class="download" href="#"><svg><use href="#i-clip"/></svg>ดาวน์โหลด</a></div></article>

<article class="app-card app-card--short"><div class="thumb"><svg viewBox="0 0 231 117">
<path fill="#fff" d="M0 0h231v117H0z"/><path fill="url(#g-yel)" d="M27 1h204v19H27z"/><path fill="#aaa" d="M3 2h10v16H3z"/><path fill="#222" d="M12 2h14v10H12z"/><path fill="#ccc" d="M14 4h10v6H14zM5 16h20v3H5z"/><text class="t16 dj" x="28" y="16" fill="#2868d8">HARDWARE REGISTER</text>
<path fill="none" stroke="#666" stroke-width="1" d="M60 25h110v41H60zM60 31h110M60 59h110M80 25v41M168 25v41"/><path fill="#fff" stroke="#888" stroke-width=".6" d="M102 40h43v4h-43zM102 45h43v4h-43z"/><path fill="#ddd" stroke="#777" stroke-width=".5" d="M114 60h18v5h-18z"/><path fill="#c03020" d="M64 34h4v3h-4z"/><path fill="#208030" d="M69 34h4v3h-4z"/><path fill="#2050c0" d="M64 37h4v3h-4z"/><path stroke="#dca810" stroke-width="2" d="M74 38l-2 12"/><text class="t3" x="101" y="29" fill="red">กรุณากรอกข้อมูลเพื่อเข้าสู่ระบบ</text><text x="81" y="43" fill="#080">User Name</text><text x="81" y="48" fill="#080">Password</text><text x="118" y="64">Login</text><path fill="#000" d="M0 98h231v19H0z"/><text class="reg" x="74" y="106" fill="#bbb">Create By MIS TEAM - Oriental Copper .Co Ltd.</text><text class="reg" x="83" y="110" fill="#bbb">Contact us : </text><text class="reg" x="105" y="110" fill="#22f">mis@orientalcopper.com</text>
</svg></div><div class="info"><h3>Hardware Register</h3><a class="download" href="#"><svg><use href="#i-clip"/></svg>ดาวน์โหลด</a></div></article>
</div></section>

<section><h2>NF - Non-Ferrous</h2><div class="cards">
<article class="app-card"><div class="thumb"><svg viewBox="0 0 231 157">
<path fill="#000" d="M0 0h231v157H0z"/><rect x="3" y="0" width="55" height="9" rx="4" fill="#7ab0d0"/><text class="t6" x="15" y="7" fill="#e8e020">LME PRICE</text><path fill="#fff" d="M2 18h48v8H2zM51 14h172v13H51zM0 35h228v110H0z"/><text class="t6" x="3" y="24" fill="#2878e0">LAST RUNNING</text><text class="t10" x="53" y="24" fill="#2080e8">5904.00 USD(24 Jun 2020||13:52)</text><text class="t5" x="89" y="41" fill="#f09030">LME Running Price</text>
<path fill="#999" d="M17 47h190v66H17z"/><path fill="#fcf6ec" stroke="#e4d8c0" stroke-width=".5" d="M15 45h190v67H15zM15 54h190M15 63h190M15 72h190M15 81h190M15 90h190M15 99h190M25 45v67M35 45v67M45 45v67M55 45v67M65 45v67M75 45v67M85 45v67M95 45v67M105 45v67M115 45v67M125 45v67M135 45v67M145 45v67M155 45v67M165 45v67M175 45v67M185 45v67M195 45v67"/><path fill="none" stroke="#d09820" stroke-width="1" d="M15 83l10-2 10 2 10-2 10-1 10-2h20l10-1 10-1 10-0 10-2 10 2h20l10-1 40 1"/><path stroke="#f0dcb0" stroke-width="3" stroke-dasharray="7 3" d="M17 78h48M55 75h40M95 73h20M115 71h8M125 73h78"/><path stroke="#d09820" stroke-width="2.500" stroke-dasharray="2 8" d="M24 81.500h40M64 78.500h40M104 76.500h100"/>
<path stroke="#555" stroke-width="1.500" stroke-dasharray="1.500 3" d="M8 46h0M10 46v64"/><path stroke="#d89070" stroke-width="1.200" stroke-dasharray="9 1" d="M15 115l-9 22M25 115l-9 22M35 115l-9 22M45 115l-9 22M55 115l-9 22M65 115l-9 22M75 115l-9 22M85 115l-9 22M95 115l-9 22M105 115l-9 22M115 115l-9 22M125 115l-9 22M135 115l-9 22M145 115l-9 22M155 115l-9 22M165 115l-9 22M175 115l-9 22M185 115l-9 22M195 115l-9 22M205 115l-9 22"/><text class="reg" x="89" y="143" fill="#e09060">Date-Time (Last 20 time)</text><text class="t3" x="213" y="49" fill="#a80">Cash Ask</text><text class="t8 serif" x="3" y="153" fill="#20b0f0">http://ocweb/intranet</text><text class="t5 serif" x="129" y="152" fill="#f0a020">Refresh Page on : 24/06/2020 13:53:17</text>
</svg></div><div class="info"><h3>LME Trend Graph</h3><a class="download" href="#"><svg><use href="#i-clip"/></svg>ดาวน์โหลด</a></div></article>
</div></section>

<section><h2>PD - Production Center</h2><div class="cards">
<article class="app-card"><div class="thumb"><svg viewBox="0 0 231 157">
<path fill="#80ff80" d="M0 0h231v157H0z"/><path fill="#fff" d="M0 0h231v8H0zM42 12h9v5h-9zM64 12h21v5H64zM93 12h22v5H93zM1 20h222v8H1zM26 122h25v5H26zM26 129h25v6H26zM82 122h25v5H82zM82 129h25v6H82zM82 137h25v5H82zM138 122h25v5h-25zM138 129h25v6h-25zM138 137h25v5h-25zM194 122h26v5h-26zM194 129h26v6h-26zM194 137h26v5h-26z"/><path fill="#808080" d="M2 28h221v82H2z"/><path fill="#eee" d="M2 109h221v4H2zM3 145h29v7H3zM34 145h38v7H34zM77 145h26v7H77zM105 145h28v7h-28zM134 145h33v7h-33zM191 145h34v7h-34z"/><path fill="#0ff" d="M46 115h6v4h-6z"/><path fill="red" d="M86 115h6v4h-6z"/><path fill="#ff0" d="M117 115h6v4h-6z"/><path fill="#ff8000" d="M149 115h6v4h-6z"/><path fill="#ff80ff" d="M184 115h6v4h-6z"/>
<text class="t3 reg" x="8" y="5">STOCK 2 V.2.08.00  LAST UPDATED 08-10-2018 BY MIS DEPARTMENT</text><text class="t5" x="4" y="16" fill="#00f">STOCK 2</text><g fill="#00a"><text x="28" y="16">Week</text><text x="53" y="16" class="t3">FROM</text><text x="87" y="16">TO</text></g><text x="44" y="16">24</text><text x="65" y="16" class="t3">08/06/2020</text><text x="95" y="16" class="t3">13/06/2020</text><text x="127" y="16">FIXED</text><text x="151" y="16">NON FIX</text><text x="178" y="16">ALL</text><text x="200" y="16">FINISHED</text><text x="3" y="24">Item   P.I. No.     Customer</text><text x="87" y="24">Request   Order (MT)  F (MT)  S (MT)  Fix date   Commited   Finished</text><text x="3" y="119" fill="red">Refresh Time</text><g class="t3"><text x="54" y="119">Production Finish</text><text x="93" y="119">Delay order</text><text x="125" y="119">Finish today</text><text x="156" y="119">Request order</text><text x="192" y="119">Already load date</text><text x="3" y="126">Total Order :</text><text x="64" y="126">Total Qty.</text><text x="114" y="126">Balance Qty</text><text x="170" y="126">Shipped Qty</text><text x="3" y="133">Date</text><text x="70" y="133">Month</text><text x="114" y="133">Shipped Qty</text><text x="179" y="133">Tin Qty</text><text x="61" y="141">Delay Order</text><text x="112" y="141">Finish Today</text><text x="167" y="141">Request Order</text><text x="5" y="150">Refresh by Pms</text><text x="36" y="150">Refresh by fixed date</text><text x="80" y="150">Order Status</text><text x="113" y="150">PRINT</text><text x="143" y="150">Stock List</text><text x="205" y="150">Exit</text></g>
</svg></div><div class="info"><h3>Stock2</h3><a class="download" href="#"><svg><use href="#i-clip"/></svg>ดาวน์โหลด</a></div></article>

<article class="app-card"><div class="thumb"><svg viewBox="0 0 231 157">
<path fill="#f0f0f0" d="M0 0h231v157H0z"/><text class="t3 reg" x="8" y="5">Drawing Packing Ingot V.2.11.00  Last Update 30-01-2020  By MIS Dpt.</text><path fill="#c0c0ff" d="M8 16h99v8H8z"/><path fill="#8080ff" d="M121 9h33v6h-33z"/><path fill="#ffc0c0" d="M189 9h34v6h-34z"/><path fill="#fff" d="M30 9h23v5H30zM83 9h32v5H83zM170 17h10v6h-10zM196 17h22v6h-22zM12 78h92v4H12zM113 64h107v4H113z"/><path fill="#ffe0c0" d="M13 26h90v6H13z"/><path fill="#808080" d="M12 34h91v45H12zM113 31h107v34H113z"/><path fill="#008080" d="M13 37h90v4H13z"/><path fill="#c0c0c0" d="M113 27h107v4H113zM12 33h91v4H12zM199 146h21v6h-21z"/><path fill="#ff80ff" d="M113 78h24v6h-24z"/><path fill="#80e0ff" d="M169 71h17v5h-17z"/><path fill="#ffffa0" d="M189 70h31v6h-31z"/>
<text x="3" y="13">SERIAL NO.</text><text class="t3" x="125" y="13">Double Drawing</text><text class="t5" x="162" y="14" fill="#00f">Pack เพิ่ม</text><text x="192" y="13" fill="#a00">Clear Pack Box</text><text x="14" y="21" fill="#a00">T5        T9         T10       T30       T50</text><text x="115" y="22">TOTAL INGOT</text><text x="149" y="22" fill="red">0</text><text x="155" y="22">SHIFT :</text><text x="182" y="22">LINE :</text><text x="197" y="22">DWT10</text><text class="t5" x="46" y="31" fill="#a00">LINE 10 T</text><text x="113" y="75" fill="#00f">TOTAL PACK :</text><text x="157" y="75" fill="#00f">PCS.</text><text x="193" y="75">PO STOCK</text><text x="120" y="82">Tag</text><text x="145" y="82">CLEAR</text><text x="175" y="82">SAVE</text><text x="202" y="82">EXIT</text>
<path fill="#c0ffc0" d="M8 88h210v53H8z"/><path fill="#ffffc0" d="M8 92h210v10H8z"/><path fill="#f07070" d="M26 95h18v44H26z"/><path fill="#0078d8" d="M26 88h18v7H26z"/><path fill="url(#p-table)" d="M8 88h210v52H8z"/><path stroke="#444" stroke-width="1.300" stroke-dasharray="13 4 15 4 20 3 30 8" d="M10 90h205M10 95h205M10 99h205M10 104h205M10 108h205M10 112h205M10 117h205M10 121h205M10 126h205M10 130h205M10 134h205M10 138h205"/><path fill="#f77" d="M10 147h27v3H10z"/><path fill="#ff0" d="M38 147h27v3H38z"/><path fill="#ff8000" d="M66 147h27v3H66z"/><path fill="#c0ffc0" d="M95 147h28v3H95z"/><path fill="#ffffc0" d="M124 147h26v3h-26z"/><text x="100" y="150" fill="#00a">Transferred</text><text x="129" y="150" fill="#00a">PB Stock</text><text x="163" y="150" fill="#00a">All</text><text x="179" y="150" fill="#00a">PB Stock</text><text x="203" y="150">Refresh</text>
</svg></div><div class="info"><h3>PackIngot</h3><a class="download" href="#"><svg><use href="#i-clip"/></svg>ดาวน์โหลด</a></div></article>

<article class="app-card"><div class="thumb"><svg viewBox="0 0 231 157">
<path fill="#ffc080" d="M0 0h231v157H0z"/><path fill="#fff" d="M0 0h231v6H0zM2 9h75v6H2z"/><text class="t3 reg" x="6" y="4">Material Transfer Version 1.21.00 Update 25-02-2020  By MIS Department</text><text class="t6" x="16" y="14" fill="#c02000">Material Transfer</text><path fill="#c000c0" d="M2 24h102v5H2zM2 30h200v15H2z"/><path fill="#00c0c0" d="M107 9h20v5h-20zM162 9h21v5h-21zM2 17h23v5H2zM65 17h22v5H65zM108 24h22v4h-22zM155 24h22v4h-22zM2 46h22v5H2zM49 46h18v5H49zM102 46h20v5h-20zM157 46h20v5h-20zM44 53h16v5H44zM97 53h16v5H97zM49 60h18v5H49zM170 60h32v5h-32zM4 31h26v5H4zM75 31h35v5H75zM4 38h26v5H4z"/><path fill="#ffffb0" d="M128 9h28v5h-28zM131 24h23v4h-23zM178 24h24v4h-24zM33 31h39v5H33zM113 31h39v5h-39zM26 47h20v4H26zM124 47h20v4h-20zM61 53h30v5H61zM114 53h40v5h-40zM179 53h23v5h-23z"/><path fill="#dcdcdc" d="M88 17h97v5H88zM33 38h167v5H33zM69 47h20v4H69zM180 47h22v4h-22zM2 53h40v5H2zM186 17h16v5h-16zM205 28h16v4h-16z"/><path fill="#ffc0c0" d="M33 17h30v5H33zM157 53h20v5h-20zM205 53h12v5h-12z"/><path fill="#000" d="M185 9h17v5h-17zM2 67h200v24H2z"/>
<path fill="#80ff80" d="M23 69h17v6H23zM43 69h17v6H43zM63 69h17v6H63zM83 69h17v6H83zM103 69h17v6h-17zM123 69h17v6h-17zM143 69h16v6h-16zM162 69h17v6h-17zM182 69h18v6h-18zM5 77h14v5H5zM5 83h14v5H5z"/><path fill="#dcdcdc" d="M23 77h17v5H23zM43 77h17v5H43zM63 77h17v5H63zM83 77h17v5H83zM103 77h17v5h-17zM123 77h17v5h-17zM143 77h16v5h-16zM162 77h17v5h-17zM182 77h18v5h-18zM23 83h17v5H23zM43 83h17v5H43zM63 83h17v5H63zM83 83h17v5H83zM103 83h17v5h-17zM123 83h17v5h-17zM143 83h16v5h-16zM162 83h17v5h-17zM182 83h18v5h-18z"/><path fill="#8080ff" d="M2 92h200v64H2z"/><path fill="#fff" d="M4 93h196v49H4z"/><path fill="#a8ffa8" d="M21 97h15v41H21z"/><path fill="url(#p-table)" d="M4 93h192v45H4z"/><path stroke="#555" stroke-width="1.300" stroke-dasharray="12 5 11 4 15 4 26 18 4 8 9 5" d="M6 95h190M6 99.500h190M6 103h190M6 107h190M6 111h190M6 115h190M6 119h190M6 123h190M6 127h190M6 131h190M6 135h190"/>
<path fill="#ffffb0" d="M204 81h26v6h-26zM204 90h26v5h-26zM99 144h17v3H99zM39 149h12v4H39zM73 149h13v4H73zM107 149h14v4h-14zM140 149h18v4h-18z"/><path fill="#ff80ff" d="M204 98h26v7h-26z"/><path fill="#80ff80" d="M204 107h26v6h-26zM204 141h26v6h-26z"/><path fill="#c0ffc0" d="M204 116h26v6h-26zM204 124h26v6h-26zM59 144h17v3H59z"/><path fill="#ffb0b0" d="M204 133h26v5h-26zM79 144h17v3H79zM21 149h16v4H21zM55 149h16v4H55zM91 149h15v4H91zM126 149h13v4h-13z"/><path fill="#eee" d="M204 72h26v6h-26zM120 144h16v3h-16z"/><path fill="#b0b0b0" d="M204 150h26v6h-26z"/>
<g class="t3"><text x="112" y="13">DATE</text><text x="130" y="13">12 Jun 2020</text><text x="166" y="13">STATUS</text><text x="9" y="21">CASE NO.</text><text x="71" y="21">CUST</text><text x="114" y="28">NO.1</text><text x="162" y="28">NO.2</text><text x="7" y="35">ORDER NO :</text><text x="78" y="35">FROM ORDER NO :</text><text x="7" y="42">SIZE DESC :</text><text x="6" y="50">LENGTH</text><text x="50" y="50">WT / PCS</text><text x="109" y="50">PCS</text><text x="161" y="50">CAL WT</text><text x="48" y="57">SEC.</text><text x="100" y="57">DEST</text><text x="161" y="57">ACT WT</text><text x="6" y="64" fill="#c00">Mat Defect in 6S/C3</text><text x="174" y="64" fill="#c00">Return Material</text><text x="208" y="77">PN TO QC</text><text x="210" y="86">QP/WP/SB</text><text x="207" y="94">QP/Substance</text><text x="208" y="103">Logbatch</text><text x="206" y="112">Call Print Tag</text><text x="213" y="121">New</text><text x="213" y="130">Save</text><text x="213" y="138">Void</text><text x="211" y="146">Report</text><text x="213" y="155">Exit</text><text x="62" y="147">Normal</text><text x="83" y="147">Reject</text><text x="103" y="147">Void</text><text x="120" y="147">Approve</text><text x="25" y="153">SEC</text><text x="40" y="153">ALL</text><text x="58" y="153">DEST</text><text x="74" y="153">ALL</text><text x="92" y="153">MONTH</text><text x="109" y="153">06</text><text x="128" y="153">YEAR</text><text x="142" y="153">2020</text></g>
</svg></div><div class="info"><h3>Tranfer Mat</h3><a class="download" href="#"><svg><use href="#i-clip"/></svg>ดาวน์โหลด</a></div></article>

<article class="app-card"><div class="thumb"><svg viewBox="0 0 231 157">
<path fill="#f0f0f0" d="M0 0h231v157H0z"/><path fill="#fff" d="M0 0h231v7H0zM0 59h231v22H0z"/><path fill="#dcdcdc" d="M1 24h230v34H1z"/><path fill="#8b0000" d="M1 13h230v9H1z"/><path fill="#aaa" d="M1 81h230v76H1z"/><path fill="#eee" d="M15 15h22v5H15zM39 14h17v7H39zM60 14h19v7H60zM82 14h19v7H82z"/><path fill="#d8f8f8" stroke="#999" stroke-width=".4" d="M18 26h26v5H18zM18 34h26v5H18zM18 41h26v5H18zM64 34h26v5H64zM64 41h26v5H64zM112 41h26v5h-26z"/><path fill="#fff4d8" stroke="#999" stroke-width=".4" d="M64 26h26v5H64zM112 26h26v5h-26zM112 34h26v5h-26zM149 26h9v5h-9zM159 26h59v5h-59zM159 42h59v5h-59zM18 49h9v5h-9zM29 49h61v5H29zM112 49h26v5h-26zM15 61h10v5H15z"/><path fill="#189aa8" d="M91 26h6v5h-6zM91 49h6v5h-6z"/><path fill="#ccc" d="M132 60h23v7h-23zM156 60h17v7h-17zM174 60h16v7h-16zM191 60h12v7h-12zM204 60h14v7h-14zM159 34h20v4h-20zM180 34h38v4h-38z"/><path fill="#0078d8" d="M11 76h16v5H11z"/>
<g class="t3 reg"><text x="5" y="4">PD Other Process</text><text x="2" y="11">Rework  Milling &amp; Packing</text><text x="4" y="19" fill="#fff">DATE :</text><text x="16" y="19">08-07-2020</text><text x="40" y="19">Schedule Plan</text><text x="61" y="19">Rework Used.</text><text x="85" y="19">Tracking</text><text x="110" y="19" fill="#fff">SHIFT :  ●A  ●B  ●C  ●D  ●E</text><text x="171" y="19" fill="#fff">TEAM :  ●A  ●B  ●C  ●D</text><text x="8" y="30">Order :</text><text x="46" y="30">Rework No. :</text><text x="101" y="30">PI No. :</text><text x="140" y="30">Size :</text><text x="9" y="38">Start :</text><text x="54" y="38">Finish :</text><text x="95" y="38">Total Time :</text><text x="141" y="38">Break Time : 0</text><text x="3" y="45">Total Pcs :</text><text x="50" y="45">Good Pcs :</text><text x="100" y="45">Defect :</text><text x="143" y="45">Customer :</text><text x="3" y="53">Employee :</text><text x="99" y="53">NOPCS :</text><text x="146" y="53">Process :</text><text x="197" y="53" fill="#080">Finish Process</text><text x="4" y="65">Found</text><text x="27" y="65">Items.</text><text x="135" y="65" fill="#777">Use Material</text><text x="161" y="65">New</text><text x="177" y="65">Save</text><text x="192" y="65" fill="#777">Delete</text><text x="208" y="65">Exit</text><text x="12" y="73">Date         Shift    Team     Orderno      Pms       Rw.Date      Worker   Process    Time in    Time out    Time span   Total pcs</text><text x="12" y="79" fill="#fff">2020-07-08</text><text x="28" y="79">A          A         10040210-050  10900040020 RE202007080040001  REWORK   REPACK    8        9.3     30     10    0</text></g>
</svg></div><div class="info"><h3>OtherProcess(Rework_Milling)</h3><a class="download" href="#"><svg><use href="#i-clip"/></svg>ดาวน์โหลด</a></div></article>

<article class="app-card"><div class="thumb"><svg viewBox="0 0 231 157">
<path fill="#fff" d="M0 0h231v157H0z"/><path fill="url(#g-brown)" d="M0 0h230v34H0z"/><circle cx="11" cy="12" r="9" fill="#e8a040" stroke="#c07020"/><circle cx="11" cy="12" r="4" fill="none" stroke="#fff0c0"/><text class="t14" x="26" y="21" fill="#1090f0">PRODUCTION</text><text class="t14" x="121" y="21" fill="#f04810">CARD</text><path fill="#fff" d="M164 8h30v18h-30zM198 8h30v18h-30z"/><path fill="#d02040" d="M165 9h14v16h-14zM199 9h14v16h-14z"/><circle cx="186" cy="17" r="5" fill="none" stroke="#888"/><circle cx="220" cy="17" r="5" fill="none" stroke="#888"/><text x="2" y="28" fill="#d84810">OC-LTP</text><text class="t6 serif" x="146" y="32" fill="#ff9020">ORIENTAL COPPER CO.,LTD.</text>
<path fill="none" stroke="#777" stroke-width="1" d="M60 40h110v52H60zM60 47h110M60 83h110M79 40v52M167 40v52"/><path fill="#fff" stroke="#888" stroke-width=".6" d="M102 60h43v5h-43zM102 66h43v5h-43z"/><path fill="#804000" d="M114 84h18v7h-18z"/><path fill="#c03020" d="M64 51h4v4h-4z"/><path fill="#208030" d="M69 51h4v4h-4z"/><path fill="#2050c0" d="M64 56h4v4h-4z"/><path stroke="#dca810" stroke-width="2" d="M74 56l-3 17"/><text class="t3" x="101" y="45" fill="#842">กรุณากรอกข้อมูลเพื่อเข้าสู่ระบบ</text><text x="81" y="64" fill="#842">User Name</text><text x="81" y="70" fill="#842">Password</text><text x="118" y="89" fill="#fff">Login</text><path fill="#996633" d="M0 132h230v24H0z"/><text class="reg" x="74" y="143" fill="#fff">Create By MIS TEAM - Oriental Copper Co., Ltd.</text><text class="reg" x="83" y="148" fill="#fff">Contact us :</text><text class="reg" x="105" y="148" fill="#00f">mis@orientalcopper.com</text>
</svg></div><div class="info"><h3>Production Card Online</h3><a class="download" href="#"><svg><use href="#i-clip"/></svg>ดาวน์โหลด</a></div></article>
</div></section>

<section><h2>PK - Packing</h2><div class="cards">
<article class="app-card"><div class="thumb"><svg viewBox="0 0 231 157">
<path fill="#000" d="M0 0h231v157H0z"/><path fill="#fff" d="M0 0h231v6H0zM5 19h34v6H5zM41 19h26v7H41z"/><path fill="#00c000" d="M5 8h69v5H5zM183 9h9v8h-9zM194 9h9v8h-9z"/><path fill="#eee" d="M76 7h68v19H76zM145 7h34v10h-34zM145 19h34v8h-34z"/><path fill="#c0c0c0" d="M204 9h9v8h-9zM215 9h9v8h-9zM136 28h92v83h-92z"/><path fill="#ff8000" d="M4 28h130v84H4z"/><text x="33" y="12" fill="#fff">PK/T30</text><text x="5" y="17" fill="#fff">Served by Order No. :</text><text x="46" y="24">Refresh</text><text class="t12" x="80" y="20" fill="#c00000">DRAWING</text><text class="t8" x="151" y="15" fill="#c00000">TARE</text><text class="t6" x="185" y="15">1</text><text class="t6" x="196" y="15">2</text><text class="t6" x="206" y="15">3</text><text class="t6" x="217" y="15">4</text>
<path fill="#fff" d="M39 31h34v7H39zM39 51h16v6H39zM57 51h17v6H57zM102 51h29v6h-29zM8 58h118v47H8z"/><path fill="#dcdcdc" d="M76 31h56v17H76z"/><text class="t5" x="7" y="37">Serial No1.</text><text class="t14" x="89" y="45" fill="red">0.00</text><text x="7" y="55">Std.Min-Max</text><text x="43" y="55">0.00</text><text x="61" y="55">0.00</text><text class="t5" x="79" y="56">Boxcode</text><path fill="none" stroke="#44c" stroke-width=".6" d="M10 63h116M10 69h116M10 74h116M10 79h116M10 84h116M10 89h116M10 95h116M10 100h116M32 58v47M54 58v47M76 58v47M92 58v47M112 58v47M121 58v47"/><g class="t3"><text x="11" y="62">Date          Serial1       Serial2        Tare       Gross  Min</text><text x="11" y="68">12/06/2020   5080528                   42.00        .00     0</text><text x="11" y="73">12/06/2020   5081117                   45.50        .00     0</text><text x="11" y="78">12/06/2020   819406                    16.50     1271.00  0</text><text x="11" y="83">12/06/2020   2080017                    .00      17.00     0</text><text x="11" y="88">12/06/2020   819126                    18.00     1233.50  0</text><text x="11" y="94">12/06/2020   4897175                   36.50        .00     0</text><text x="11" y="99">12/06/2020   5080803                   34.40        .00     0</text><text x="11" y="104">12/06/2020   819246                    27.00     1362.00  0</text></g>
<path fill="#c0ffff" d="M161 34h29v5h-29zM152 60h21v6h-21zM166 93h21v5h-21z"/><path fill="#ffc080" d="M192 34h32v5h-32zM140 40h84v5h-84zM140 47h84v5h-84zM166 99h30v4h-30z"/><path fill="#ffffb0" d="M180 60h21v6h-21zM166 104h30v4h-30z"/><path fill="#808080" d="M138 68h87v24h-87z"/><path fill="#eee" d="M138 68h39v5h-39zM138 75h20v4h-20z"/><path fill="#f77" d="M158 74h19v5h-19z"/><path fill="#f88" d="M209 93h17v5h-17z"/><text x="140" y="33" fill="#00f">New Packing Scale</text><text class="t3" x="141" y="38">ORDER NO.</text><text x="139" y="65">PCS :</text><text x="203" y="65">KGS</text><text class="t3" x="138" y="97">Standard WT</text><text class="t3" x="168" y="97" fill="#00f">STD   wpp_std   DIM  100.00%</text><text class="t3" x="168" y="103">STR   wpp_str   DIM  100.00%</text><text x="168" y="108">ACT</text><text x="208" y="108">Save</text><path fill="#008080" stroke="#999" stroke-width=".6" d="M7 116h143v22H7z"/><path fill="#c00000" stroke="#eee" stroke-width=".6" d="M159 117h23v20h-23z"/><text class="t9 mid" x="78" y="128" fill="#fff">อยู่ระหว่างรอชั่งน้ำหนัก</text><text class="t14 mid serif" x="170" y="132" fill="#fff">0</text><path fill="#f88" d="M4 142h47v12H4z"/><path fill="#c0ffc0" d="M62 142h46v12H62z"/><path fill="#ff0" d="M178 142h50v12h-50z"/><g class="t6 mid"><text x="28" y="150">Void Record</text><text x="85" y="150">Refresh</text><text x="203" y="150">Exit</text></g>
</svg></div><div class="info"><h3>Packing Weight</h3><a class="download" href="#"><svg><use href="#i-clip"/></svg>ดาวน์โหลด</a></div></article>
</div></section>

<section><h2>PN - Planning</h2><div class="cards">
<article class="app-card"><div class="thumb"><svg viewBox="0 0 231 157">
<path fill="#80ff80" d="M0 0h231v157H0z"/><path fill="#fff" d="M0 0h231v5H0z"/><path fill="url(#g-fix)" d="M1 5h228v141H1z"/><path fill="#808080" d="M3 22h224v86H3z"/><path fill="#fff" d="M3 16h224v6H3zM44 9h7v5h-7zM64 9h20v5H64zM88 9h21v5H88zM3 107h224v3H3zM33 120h21v6H33zM82 120h24v6H82zM140 120h25v6h-25zM196 120h25v6h-25zM33 129h21v5H33zM82 129h24v5H82zM140 129h25v5h-25zM196 129h25v5h-25zM82 137h24v5H82zM140 137h25v5h-25zM196 137h25v5h-25z"/><path fill="#f0f0f0" d="M1 148h28v7H1zM31 148h32v7H31zM66 148h27v7H66zM95 148h26v7H95zM124 148h29v7h-29zM154 148h39v7h-39zM202 148h26v7h-26z"/><path fill="#0ff" d="M51 113h5v4h-5z"/><path fill="red" d="M90 113h6v4h-6z"/><path fill="#ff0" d="M121 113h5v4h-5z"/><path fill="#ff8000" d="M153 113h6v4h-6z"/><path fill="#ff80ff" d="M190 113h5v4h-5z"/>
<text class="t5" x="3" y="13">FIX DATE</text><g class="t3"><text x="2" y="4" class="reg">Fix_Date ( Fixdate )  V.2.08.00  LAST UPDATE 08-10-2018  BY MIS DEPARTMENT</text><text x="31" y="12" fill="#00a">Week #   24   FROM  08/06/2020  TO  13/06/2020</text><text x="120" y="12">FIXED          NON FIX       ALL         FINISHED</text><text x="3" y="20">Item   P.I. No.    Customer                Request  Order (MT)  F. (MT)  S (MT)   Fix date   Commited   Finished  Fin S   Payment Term</text><g fill="#fff"><text x="58" y="116">Production Finish</text><text x="97" y="116">Delay order</text><text x="128" y="116">Finish today</text><text x="160" y="116">Request order</text><text x="196" y="116">Already load date</text><text x="9" y="125">Total Order :</text><text x="63" y="125">Total Qty.</text><text x="115" y="125">Balance Qty</text><text x="172" y="125">Shipped Qty</text><text x="21" y="133">Date</text><text x="67" y="133">Month</text><text x="115" y="133">Shipped Qty</text><text x="181" y="133">Tin Qty</text><text x="58" y="141">Delay Order</text><text x="114" y="141">Finish Today</text><text x="168" y="141">Request Order</text></g><text x="4" y="153">Refresh by Pms</text><text x="33" y="153">Refresh by fixed date</text><text x="71" y="153">Order Status</text><text x="98" y="153">EXPORT EXCEL</text><text x="132" y="153">Stock List</text><text x="163" y="153">Confirm Fixdate</text><text x="212" y="153">Exit</text></g><text x="3" y="116" fill="#ff0">Refresh Time</text>
</svg></div><div class="info"><h3>Fix Date</h3><a class="download" href="#"><svg><use href="#i-clip"/></svg>ดาวน์โหลด</a></div></article>

<article class="app-card"><div class="thumb"><svg viewBox="0 0 231 157">
<path fill="#004000" d="M0 0h231v157H0z"/><path fill="#fff" d="M0 0h231v5H0z"/><path fill="#a04080" d="M1 1h4v4H1z"/><text class="t3 reg" x="7" y="4">PLANNING (SAP) PROGRAM Ver 3.10.00  Last Update 03/04/2019</text><path fill="#f0f0f0" stroke="#ccc" d="M7 16h217v12H7zM66 36h99v10H66zM66 47h99v11H66zM66 59h99v11H66zM66 71h99v11H66zM66 84h99v11H66zM66 96h99v11H66zM66 108h99v11H66zM66 134h99v11H66z"/><text class="t10 mid dj" x="116" y="26" fill="#00f">Planning(SAP) System Menu</text><g class="t8 mid serif"><text x="115" y="44">Order Entry</text><text x="115" y="55">Request Sample Order</text><text x="115" y="67">Extrusion Program</text><text x="115" y="79">Test Order Program</text><text x="115" y="92">Approve No Order</text><text x="115" y="104">Check Planned Die</text><text x="115" y="116">Unlock Program Mode</text><text x="115" y="142">Exit Program</text></g>
</svg></div><div class="info"><h3>Plan_SAP</h3><a class="download" href="#"><svg><use href="#i-clip"/></svg>ดาวน์โหลด</a></div></article>

<article class="app-card"><div class="thumb"><svg class="reg" viewBox="0 0 231 157">
<path fill="#fff" d="M0 0h231v157H0z"/><path fill="#acd24c" d="M0 0h231v1H0zM0 142h231v1H0z"/><rect x="22" y="12" width="193" height="105" rx="2" fill="#999"/><rect x="21" y="10" width="192" height="105" rx="2" fill="#e9eeee" stroke="#ccc"/><text class="t9 bold serif ul" x="27" y="40">Posdelay Login From</text><path fill="#fff" stroke="#444" d="M102 57h57v11h-57z"/><path fill="#fff" stroke="#aaa" d="M102 70h57v11h-57zM102 84h18v10h-18z"/><g class="t6 serif"><text x="74" y="64">Username :</text><text x="75" y="77">Password :</text><text x="105" y="91">Login</text><text x="49" y="103">*** Username and Password same as Windows Logon ***</text></g>
</svg></div><div class="info"><h3>Post Delay</h3><a class="download" href="#"><svg><use href="#i-clip"/></svg>ดาวน์โหลด</a></div></article>

<article class="app-card"><div class="thumb"><svg class="reg" viewBox="0 0 231 157">
<path fill="#fff" d="M0 0h231v157H0z"/><path fill="#f0f0f0" d="M0 12h231v40H0z"/><path fill="#fff" d="M4 37h227v13H4z"/><g class="t3"><text x="5" y="4">Planning Database (PNDB)</text><text x="3" y="10">Menu ▾   Customize ▾   Report ▾</text><text x="2" y="17">Extrusion Times   Sharing   Monitoring Wip Stock   4 Month Schedule</text><text x="12" y="25">Show:  Simulate    ▾     Excel Stock FG For Today</text><text x="4" y="34">Monitor Group FG   All Baska Group FG   Monitor BFF     Nugget  Annealing  Milling   Ball    Copper Tape   TTM   All Fabricate   Simulate Order TP</text><text x="37" y="45">การตรวจสอบสถานะการผลิต</text><text x="78" y="45">รีเฟรชตามวันที่</text><text x="106" y="45">กำหนดส่งวันใกล้</text><text x="134" y="45">ค้างส่ง</text><text x="17" y="56">Deadline    Plan_Order_Date  Plan_Finish   PI_no         Customer  BPO/Code  Ingot_Kg   order_qty   And_Shipped  And_Pr_wt   And_Throat</text></g><path fill="#ff0" d="M71 36h6v14h-6z"/><path fill="#ffd800" d="M100 36h5v14h-5z"/><path fill="#ffc0ff" d="M129 36h5v14h-5z"/><path fill="#9acd32" d="M149 36h5v14h-5zM66 58h23v99H66zM152 58h32v99h-32zM202 58h16v99h-16z"/><path fill="#bdb76b" d="M118 58h34v99h-34z"/><path fill="#eaf6ff" d="M16 58h50v99H16z"/><path fill="#0078d8" d="M16 58h15v5H16z"/><path fill="#ffb6c1" d="M66 97h23v5H66zM66 130h23v5H66zM66 146h23v11H66z"/><path fill="#ffd800" d="M185 58h33v5h-33zM218 58h13v11h-13zM152 97h32v5h-32zM152 130h32v5h-32zM185 119h17v5h-17zM152 146h32v11h-32zM218 146h13v11h-13zM202 91h16v5h-16z"/><path fill="none" stroke="#aaa" stroke-width=".5" d="M3 52h228M3 58h228M3 63h228M3 69h228M3 74h228M3 80h228M3 85h228M3 91h228M3 97h228M3 102h228M3 108h228M3 113h228M3 119h228M3 124h228M3 130h228M3 135h228M3 141h228M3 146h228M3 152h228M3 52v105M16 52v105M33 52v105M51 52v105M66 52v105M89 52v105M104 52v105M118 52v105M135 52v105M152 52v105M168 52v105M185 52v105M202 52v105M218 52v105"/><path stroke="#456" stroke-width="1" stroke-dasharray="14 3 11 6 8 7 13 11 11 4" d="M17 61h212M17 66h212M17 72h212M17 77h212M17 83h212M17 88h212M17 94h212M17 99.500h212M17 105h212M17 110.500h212M17 116h212M17 121.500h212M17 127h212M17 132.500h212M17 138h212M17 143.500h212M17 149h212M17 154.500h212"/>
</svg></div><div class="info"><h3>PNDB</h3><a class="download" href="#"><svg><use href="#i-clip"/></svg>ดาวน์โหลด</a></div></article>
</div></section>

<section><h2>QC - Quality Control</h2><div class="cards">
<article class="app-card"><div class="thumb"><svg viewBox="0 0 231 157">
<path fill="#0000c0" d="M0 0h231v157H0z"/><path fill="#fff" d="M0 0h231v6H0z"/><text class="t3 reg" x="7" y="4">Spectro Monitoring  Version: 1.10.00   Last Updated 28-03-2008  By MIS Dept.</text><path fill="#c0c0c0" d="M2 7h226v32H2zM2 40h226v55H2zM2 97h115v45H2zM119 97h109v45H119z"/><path fill="#000040" d="M93 13h23v4H93zM93 19h27v4H93z"/><path fill="#fff" d="M41 16h26v6H41zM3 27h224v9H3zM4 46h218v43H4zM4 103h104v38H4zM121 103h98v38h-98zM141 144h27v10h-27zM171 144h27v10h-27zM201 144h26v10h-26z"/><path fill="#ffe0b8" d="M4 46h218v4H4z"/><path fill="url(#p-table)" d="M4 46h218v43H4zM4 103h104v38H4zM121 103h98v38h-98zM3 27h224v9H3z"/><path stroke="#444" stroke-width="1.300" stroke-dasharray="14 6 17 4 20 6 12 4 8 5 8 5 8 5" d="M5 48h215M5 53h215M5 57h215M5 61.500h215M5 66h215M5 70.500h215M5 75h215M5 79.500h215M5 84h215M5 88h215M5 105h101M5 110h101M5 114h101M5 118.500h101M5 123h101M5 127.500h101M5 132h101M5 136.500h101M122 105h94M122 110h94M122 114h94M122 118.500h94M122 123h94M122 127.500h94M122 132h94M122 136.500h94"/><g fill="#00f"><text x="6" y="10">Spectro Data by Logbatch No.</text><text x="20" y="20">Logbatch</text><text x="80" y="16">% Cu</text><text x="77" y="22">O (ppm)</text><text x="6" y="44">Spectro Data Recorder</text><text x="6" y="101">Gas Analysis Data</text><text x="122" y="101">Event Recorder</text></g><text x="201" y="22">Auto Update</text><text class="t3" x="4" y="31">%Cu    O        Sn1    Zn5   Pb2   Fe0   Ni2    Al0    P1     S3    Mn1   S       Cd1   Bi4    Cr1    Sb1   Mg2   As2   Se1   Te1   Ag4   Be3   Co1   Zr2</text><text x="149" y="151">Report</text><text x="178" y="151">Refresh</text><text x="211" y="151">EXIT</text>
</svg></div><div class="info"><h3>Spectro Monitoring</h3><a class="download" href="#"><svg><use href="#i-clip"/></svg>ดาวน์โหลด</a></div></article>
</div></section>

<section><h2>RK - Risk Management</h2><div class="cards">
<article class="app-card"><div class="thumb"><svg class="reg os" viewBox="0 0 231 157">
<path fill="#efefef" d="M0 0h231v157H0z"/><rect x="25" y="2" width="178" height="125" rx="3" fill="#fff"/><rect x="25" y="131" width="178" height="18" rx="3" fill="#fff"/><text class="t9 mid" x="114" y="30" fill="#555">RK DOCUMENT CONTROL</text><path fill="#fff" stroke="#ccc" stroke-width=".7" d="M45 48h138v13H45zM45 67h138v13H45zM62 48v13M62 67v13"/><path fill="#555" d="M51 56q3-3 5 0v1h-5zM52 53h3v2h-3zM51 72h3v3h-3zM54 74h2v2h-2z"/><text class="t6" x="67" y="76" fill="#999">******</text><path fill="#3aacb0" d="M45 86h138v15H45z"/><text class="t5 mid" x="114" y="95" fill="#fff">LOGIN</text><text class="t5" x="46" y="142" fill="#666">Not a registered user yet?</text><text class="t5" x="109" y="142" fill="#3aa0a8">Sign up now!</text><text class="t5" x="142" y="142">| |</text><text class="t5" x="150" y="142" fill="#3aa0a8">Login Admin</text>
</svg></div><div class="info"><h3>RK Document Control</h3><a class="download" href="#"><svg><use href="#i-clip"/></svg>ดาวน์โหลด</a></div></article>
</div></section>

<section><h2>TP - Tin Plate</h2><div class="cards">
<article class="app-card"><div class="thumb"><svg viewBox="0 0 231 157">
<path fill="#606060" d="M0 0h231v157H0z"/><path fill="#fff" d="M0 0h231v6H0z"/><path fill="#ff0" d="M1 6h229v7H1z"/><path fill="#dcdcdc" d="M1 13h229v82H1zM190 7h19v5h-19zM212 7h14v5h-14z"/><text class="t3 reg" x="6" y="4">TINPLATED PRODUCTION DATA V.2.20.00 LAST UPDATED 13-04-2020 BY MIS DEPARTMENT</text><text class="t6" x="69" y="12" fill="#00f">TINPLATED PRODUCTION DATA</text><path fill="#fff" d="M23 16h31v6H23zM22 25h15v5H22zM57 25h5v5h-5zM79 25h20v5H79zM110 25h31v5h-31zM106 32h13v5h-13zM134 32h14v5h-14zM22 47h106v5H22zM44 40h15v5H44zM81 40h15v5H81zM138 47h15v5h-15zM156 47h15v5h-15z"/><path fill="#ffe0b8" d="M22 32h69v6H22zM150 25h66v5h-66zM181 32h26v6h-26zM209 32h15v6h-15z"/><path fill="#ffc0c0" d="M150 32h29v6h-29z"/>
<path fill="#f0f" d="M2 55h54v12H2z"/><path fill="red" d="M56 55h109v12H56z"/><path fill="#00f" d="M165 55h28v12h-28z"/><path fill="#400000" d="M193 55h33v12h-33z"/><path fill="#c0ffc0" d="M2 68h54v12H2z"/><path fill="#0f0" d="M56 68h170v12H56z"/><path fill="#800000" d="M2 84h178v9H2z"/><path fill="#008080" d="M181 81h45v14h-45z"/><path fill="#fff" d="M22 60h10v5H22zM45 60h9v5h-9zM78 60h9v5h-9zM97 60h12v5H97zM122 60h10v5h-10zM152 60h11v5h-11zM175 60h9v5h-9zM32 73h14v5H32zM75 73h12v5H75zM97 73h11v5H97zM128 73h11v5h-11zM168 69h15v5h-15zM202 73h13v5h-13zM17 86h12v5H17zM42 86h12v5H42zM68 86h12v5H68zM92 86h12v5H92zM118 86h12v5h-12zM143 86h12v5h-12zM168 86h11v5h-11zM208 82h17v5h-17z"/><path fill="#fff" d="M2 97h225v38H2z"/><path fill="#ffffc0" d="M3 101h218v29H3z"/><path fill="url(#p-table)" d="M2 97h225v34H2z"/><path stroke="#446" stroke-width="1.600" stroke-dasharray="5 10 20 8 3 9 42 15 24 3 38 14 9 30" d="M9 103h212M9 107.500h212M9 112h212M9 116h212M9 120.500h212M9 125h212M9 129h212"/>
<g fill="#00f" class="t3"><text x="3" y="20">DATE</text><text x="3" y="29">RACKING</text><text x="68" y="29">Code</text><text x="94" y="29">Order No.</text><text x="144" y="29">Size Dia</text><text x="3" y="36">CUSTOMER</text><text x="94" y="36">START</text><text x="121" y="36">FINISH</text><text x="22" y="44">จำนวนชิ้น</text><text x="61" y="44">จำนวนที่ตัด</text><text x="3" y="51">REMARK</text><text x="172" y="51">SECTION</text><text x="4" y="83">ความหนาดีบุกก่อนชุบ RACK (AMP)</text><text x="5" y="100">Pos.No       Tall          Code   ชื่อลูกค้า                                        OrderNo      Size                             Size</text></g><text x="155" y="37" fill="red">DEPLATED</text><text class="t3" x="184" y="36">Use Material</text><text class="t3" x="211" y="36">Adjust</text><text x="5" y="59" fill="#ff0">Soak Clean</text><text x="58" y="59" fill="#ff0">Degreasing</text><text x="166" y="59" fill="#ff0">Pickling</text><text x="5" y="72">Acid Dip</text><text x="58" y="72">Tin Plating</text><g class="t3"><text x="5" y="65">Temp.(C)</text><text x="36" y="65">Time</text><text x="60" y="65">Temp.(C)</text><text x="88" y="65">Time</text><text x="112" y="65">Volt.</text><text x="135" y="65">Current</text><text x="14" y="78">Time</text><text x="58" y="78">Temp.(C)</text><text x="88" y="78">Time</text><text x="118" y="78">Amp.</text><text x="142" y="76">Current(Amp)</text><g fill="#fff"><text x="5" y="90">Rack1</text><text x="31" y="90">Rack2</text><text x="56" y="90">Rack3</text><text x="81" y="90">Rack4</text><text x="106" y="90">Rack5</text><text x="131" y="90">Rack6</text><text x="156" y="90">Rack7</text></g></g>
<path fill="#000" d="M0 137h55v8H0z"/><path fill="#ffffa0" d="M26 146h29v8H26z"/><path fill="#ffe0b8" d="M57 137h28v6H57z"/><path fill="#ffc0c0" d="M87 137h26v6H87z"/><path fill="#80ff80" d="M57 146h28v7H57z"/><path fill="#ddd" d="M114 137h22v6h-22zM160 137h21v6h-21zM183 137h21v6h-21zM206 137h21v6h-21zM114 146h28v6h-28z"/><g class="t3"><text x="60" y="142">Chemical Lab</text><text x="93" y="142">Tin Amp</text><text x="119" y="142">REPORT</text><text x="167" y="142">NEW</text><text x="189" y="142">SAVE</text><text x="213" y="142">EXIT</text><text x="63" y="151">APPROVE</text><text x="115" y="151">Search</text><text x="27" y="149">Day: Not Approve</text><text x="27" y="153">Night: Not Approve</text><text x="5" y="142" fill="#ff0">Drying Process Counter</text></g>
</svg></div><div class="info"><h3>Tinplate</h3><a class="download" href="#"><svg><use href="#i-clip"/></svg>ดาวน์โหลด</a></div></article>
</div></section>

<section><h2>QA - Quality Assurance</h2><div class="cards">
<article class="app-card"><div class="thumb"><svg class="reg" viewBox="0 0 231 157">
<path fill="#fff" d="M0 0h231v157H0z"/><path fill="#111" d="M0 0h231v11H0z"/><path fill="#ebebeb" d="M0 11h231v11H0zM0 42h231v19H0zM0 79h231v17H0z"/><path fill="#f6f6f6" d="M0 71h231v8H0z"/><path fill="#fff" stroke="#ccc" stroke-width=".5" d="M39 25h132v10H39zM175 25h17v10h-17zM60 82h50v10H60zM119 82h19v10h-19zM162 82h33v10h-33zM0 22v134"/><path fill="#ddd" d="M197 83h6v7h-6z"/><path fill="#933" d="M0 117h231v16H0z"/><path fill="#9cf" d="M0 142h231v10H0z"/><path stroke="#444" d="M0 106.500h231M.5 106v51"/><g class="t3"><text x="4" y="7" fill="#fff">ORIENTALCOPPER.COM</text><text x="39" y="18">DOCUMENT TYPE :WORK INSTRUCTION (WI)</text><text x="182" y="31">GO</text><text x="199" y="31">DEPARTMENT</text><text x="199" y="50">SECTION</text><text x="2" y="88">Search by Document Title</text><text x="124" y="88">Search</text><text x="140" y="88">รายงานสรุป</text><text x="167" y="88">New Document</text><text x="206" y="88">Show Cancel</text><text x="8" y="123" fill="#fff">Document No.</text><text x="105" y="123" fill="#fff">Document Title</text><text x="206" y="123" fill="#fff">Effective Date</text><text x="3" y="139" fill="#63a">WI-AC-001</text><text x="35" y="139" fill="#c33">จัดซื้อ จัดจ้าง</text><text x="201" y="139" fill="#63a">12-06-2017</text><text x="3" y="148" fill="#63a">WI-AC-002</text><text x="35" y="148" fill="#c33">การรับเงินสดและการบันทึกบัญชีรายรับ</text><text x="201" y="148" fill="#63a">12-06-2017</text><text x="3" y="156" fill="#63a">WI-AC-003</text><text x="201" y="156" fill="#63a">21-11-2016</text></g><text x="2" y="31">DOCUMENT TYPE.</text><text x="42" y="31" fill="#c33" class="t3">WORK INSTRUCTION (WI)</text>
</svg></div><div class="info"><h3>ISO CENTER</h3><a class="download" href="#"><svg><use href="#i-clip"/></svg>ดาวน์โหลด</a></div></article>
</div></section>

<section><h2>WH - Warehouse</h2><div class="cards">
<article class="app-card"><div class="thumb"><svg viewBox="0 0 231 157">
<path fill="#400000" d="M0 0h231v157H0z"/><path fill="#404040" d="M4 2h224v153H4z"/><g class="t9 serif" fill="#ff0"><text x="45" y="16">RAW</text><text x="75" y="16">MATERIAL</text><text x="135" y="16">PROGRAM</text></g><path fill="#e0e0e0" stroke="#888" d="M19 30h90v14H19zM120 30h92v14h-92zM19 53h90v13H19zM120 53h92v13h-92zM19 75h90v13H19zM120 75h92v13h-92zM19 97h90v14H19zM120 97h92v14h-92zM19 120h90v13H19z"/><path fill="#b8b8b8" stroke="#777" d="M120 120h92v13h-92z"/><g class="t7 mid"><text x="64" y="39">Raw Material Receive</text><text x="166" y="39">Internal Scrap Receive</text><text x="64" y="62">Drawing Defect Receive</text><text x="166" y="62">Raw Material Requisition</text><text x="64" y="84">Ingot &amp; Billet Requisition</text><text x="166" y="84">Claim Receive</text><text x="64" y="107">Rawmat Vendor</text><text x="166" y="107">Bin Weight</text><text x="64" y="129">Rawmat Reporting</text><text x="166" y="129">END</text></g>
</svg></div><div class="info"><h3>Rawmat</h3><a class="download" href="#"><svg><use href="#i-clip"/></svg>ดาวน์โหลด</a></div></article>

<article class="app-card"><div class="thumb"><svg viewBox="0 0 231 157">
<path fill="#c0c0c0" d="M0 0h231v157H0z"/><path fill="#fff" d="M0 0h231v7H0z"/><text class="t3 reg" x="5" y="4">Truck Scale Program V.5.20.00 LAST UPDATED 02-04-2020 BY MIS DEPARTMENT</text><text class="t5 serif" x="11" y="16" fill="#00f">โปรแกรมชั่งน้ำหนัก รถขนสินค้า (TRUCK SCALE)</text><text x="160" y="16" fill="#00f">15:10:53</text><text x="189" y="16" fill="#00f">12 Jun 2020</text><path fill="#008000" stroke="#666" stroke-width=".6" d="M9 19h214v49H9zM9 74h214v69H9z"/><path fill="#fff" d="M98 28h53v6H98z"/><path fill="#dcdcdc" d="M98 37h53v7H98zM98 48h53v7H98z"/><text x="79" y="34" fill="#fff">เครื่องชั่ง</text><text x="89" y="43" fill="#fff">ชื่อ</text><text x="79" y="53" fill="#fff">รหัสผ่าน</text><text class="t5" x="102" y="81" fill="#ff0">รถขนส่งในโรงงาน</text><path fill="#0ff" d="M13 85h208v7H13zM13 92h23v47H13z"/><path fill="#fff" d="M36 92h180v47H36z"/><path fill="#ddd" d="M216 85h5v54h-5z"/><path stroke="#888" stroke-width=".5" d="M13 92h203M13 98h203M13 104h203M13 110h203M13 116h203M13 122h203M13 127h203M13 133h203M36 85v54M59 85v54M90 85v54M112 85v54M146 85v54M177 85v54"/><text x="14" y="90" fill="#00f">บัตรผ่าน</text><text x="38" y="90" fill="#00f">ทะเบียนรถ</text><text x="68" y="90" fill="#00f">เข้าวันที่</text><text x="92" y="90" fill="#00f">เข้าเวลา</text><text x="125" y="90" fill="#00f">ผู้ชั่ง</text><text x="148" y="90" fill="#00f">ชนิดรถ</text><g class="t3"><text x="60" y="97">- 02 Jun 2020   10:25:36 CHOMWARAT  รถทั้งหมด</text><text x="18" y="103">611   71-7814/  10 Oct 2018   10:48:07 WAREHOUSE  รถทั้งหมด  ปรีชา วาจนา</text><text x="18" y="109">6111003  72-2661   01 Jan 1900                 WAREHOUSE  รถทั้งหมด  อนุวัตร</text><text x="18" y="115">6112777  70-0850   17 Oct 2018   14:12:40 K.Chonwarat    รถรับของ</text><text x="18" y="120">6116003  672-7515  07 Jan 2019   15:41:50 K.Attachai     รถทั้งหมด</text><text x="18" y="126">6116014  75-0085   01 Jan 1900                  K.Chonwarat    รถรับของ</text><text x="18" y="132">6117125  72-0859   31 Jan 2019   08:27:50 K.Chonwarat    รถรับของ</text><text x="18" y="138">6117982  970-1452  01 Jan 1900                  K.Montri       รถทั้งหมด</text></g><text x="11" y="150" fill="#00f">กำลังใช้งานโดย :</text><path fill="#eee" d="M189 145h36v9h-36z"/><text x="192" y="151" class="t3">ออกจากโปรแกรม</text>
</svg></div><div class="info"><h3>Truck Scale</h3><a class="download" href="#"><svg><use href="#i-clip"/></svg>ดาวน์โหลด</a></div></article>

<article class="app-card"><div class="thumb"><svg viewBox="0 0 231 157">
<path fill="#c0c0c0" d="M0 0h231v157H0z"/><path fill="#fff" d="M0 0h231v6H0z"/><text class="t3 reg" x="6" y="4">Box Program V.2.10.00 Update Date 17-01-2019 BY MIS DEPARTMENT</text><text class="t8 mid it" x="115" y="20" fill="#00f">MAIN MENU</text><path fill="#000040" d="M49 25h131v119H49z"/><path fill="#f0f0f0" d="M83 36h67v10H83zM83 49h67v10H83zM83 62h67v10H83zM83 75h67v10H83zM83 88h67v10H83zM83 101h67v10H83zM83 114h67v10H83zM83 127h67v12H83z"/><g class="t5 mid"><text x="116" y="43">Receive Box</text><text x="116" y="56">Void Box</text><text x="116" y="69">Gen Label</text><text x="116" y="82">Box Weight Standard</text><text x="116" y="95">Report Box</text><text x="116" y="108">Load Location FG</text><text x="116" y="121">Sent Out Source</text><text x="116" y="135">Exit</text></g>
</svg></div><div class="info"><h3>Box</h3><a class="download" href="#"><svg><use href="#i-clip"/></svg>ดาวน์โหลด</a></div></article>

<article class="app-card"><div class="thumb"><svg viewBox="0 0 231 157">
<path fill="#008080" d="M0 0h231v157H0z"/><path fill="#fff" d="M0 0h231v5H0z"/><text class="t3 reg" x="6" y="4">SHIPDN_SAP  V.2.20.00  Update Date:08-01-2020  By MIS Department.</text><path fill="#00c0c0" d="M2 6h220v78H2zM2 86h220v63H2z"/><path fill="#808080" d="M14 42h199v41H14zM14 97h199v39H14z"/><path fill="#fff" d="M27 8h41v5H27zM99 8h121v5H99zM14 42h192v7H14zM14 97h192v7H14zM18 89h18v5H18zM55 89h26v5H55zM93 89h19v5H93zM125 89h23v5h-23zM150 89h23v5h-23zM86 151h83v4H86z"/><path fill="#dcdcdc" d="M27 16h41v6H27zM27 25h41v5H27zM141 16h32v6h-32zM99 25h19v5H99zM141 25h31v5h-31zM188 25h19v5h-19zM43 33h39v5H43zM157 33h15v5h-15zM195 87h24v8h-24zM86 139h25v8H86zM112 139h26v8h-26zM140 139h25v8h-25zM167 139h26v8h-26zM195 139h24v8h-24z"/><path fill="#c0ffc0" d="M69 16h30v6H69z"/><g class="it"><text x="5" y="12">DN NO.</text><text x="72" y="12">CUSTOMER</text><text x="5" y="21">P/I NO.</text><text x="103" y="21">DELIVERY DATE</text><text x="5" y="29">PO NO.</text><text x="5" y="37">SHIPMENT NO.</text></g><text class="t3" x="73" y="21">Shipping Mark</text><text x="120" y="29">Cases</text><text x="175" y="29">Kgs.</text><text x="209" y="29">Pcs.</text><text class="t3" x="199" y="20">CUSTCODE</text><text class="t3" x="194" y="37">SHIPTOCODE</text><text x="20" y="46">Product Code</text><text x="52" y="46">Case No.</text><text x="71" y="46">Description</text><text x="153" y="46">UM</text><text x="175" y="46">Weight</text><text x="194" y="46">Pcs.</text><text x="5" y="94" fill="#00f">SHIP</text><text x="38" y="94">Cases</text><text x="82" y="94">MTs.</text><text x="113" y="94">Pcs.</text><text x="20" y="101">Product Code</text><text x="52" y="101">Case No.</text><text x="71" y="101">Description</text><text x="153" y="101">UM</text><text x="175" y="101">Weight</text><text x="194" y="101">Pcs.</text><g class="t3"><text x="14" y="139">Act.Wt         : 0</text><text x="14" y="143">Act.Extra Wt : 0</text><text x="14" y="147">Act.Tin Wt   : 0</text><text x="88" y="144" fill="#999">Delivery Note</text><text x="115" y="144">Wooden Ship</text><text x="144" y="144">Shiped Box</text><text x="169" y="144">Tranfer Report</text><text x="204" y="144">END</text><text x="200" y="92" fill="#999">Ship DN</text></g>
</svg></div><div class="info"><h3>Ship DN</h3><a class="download" href="#"><svg><use href="#i-clip"/></svg>ดาวน์โหลด</a></div></article>
</div></section>
</main>

<footer class="footer">
  <p>Center software of Oriental Copper Co.,Ltd. Developed for use within the organization and supplier that has been authorized only. Do not allow the copy to use for other organizations. Except, Approved of the develoment.</p>
  <div class="footer-row"><p><strong>COPYRIGHT © 2020 <a href="#">ORIENTAL COPPER CO.,LTD</a>.</strong> All RIGHTS RESERVED.</p><p><strong>Version</strong> 1.0.0</p></div>
</footer>
</div>
</body>
</html>
```
FILE: styles.css
```css
* { box-sizing: border-box; }

body {
  margin: 0;
  min-height: 100vh;
  display: flex;
  background: #f4f6f9;
  color: #212529;
  font: 13px/18px "Open Sans", "Noto Sans", sans-serif;
}

h1, h2, h3, p { margin: 0; }
a { color: #007bff; text-decoration: none; }
.sprite { position: absolute; width: 0; height: 0; }

/* Sidebar */
.sidebar {
  flex: 0 0 62px;
  background: #343a40;
  box-shadow: 0 8px 20px rgba(0, 0, 0, .25), 0 6px 6px rgba(0, 0, 0, .2);
  z-index: 1;
}
.brand {
  display: flex;
  justify-content: center;
  align-items: center;
  height: 48px;
  padding-bottom: 3px;
  border-bottom: 1px solid #4b545c;
}
.brand svg {
  width: 28px;
  height: 28px;
  border-radius: 50%;
  box-shadow: 0 6px 10px rgba(0, 0, 0, .35);
}
.side-nav { padding: 7px; }
.side-link {
  display: flex;
  justify-content: center;
  align-items: center;
  height: 34px;
  border-radius: 3px;
  background: #007bff;
  color: #fff;
  box-shadow: 0 1px 3px rgba(0, 0, 0, .3);
}
.side-link svg { width: 16px; height: 16px; }

/* Main column */
.page {
  flex: 1;
  min-width: 0;
  display: flex;
  flex-direction: column;
}
.topbar {
  display: flex;
  align-items: center;
  height: 48px;
  padding: 0 13px;
  background: #fff;
  border-bottom: 1px solid #dee2e6;
}
.menu-btn {
  display: flex;
  padding: 6px;
  border: 0;
  background: none;
  color: #808080;
}
.menu-btn svg { width: 14px; height: 12px; }

.content { flex: 1; padding: 16px 11px 0 10px; }
.toolbar {
  display: flex;
  justify-content: space-between;
  align-items: flex-start;
  height: 35px;
  padding: 0 6px 0 7px;
}
h1 { font-size: 16px; line-height: 24px; text-decoration: underline; }
.filter { display: flex; gap: 1px; }
.filter select {
  width: 234px;
  height: 32px;
  padding: 0 10px;
  border: 1px solid #ced4da;
  border-radius: 3px;
  background: #fff;
  color: #495057;
  font: inherit;
  font-size: 12px;
}
.filter button {
  width: 75px;
  height: 32px;
  padding: 0;
  border: 1px solid #6c757d;
  border-radius: 3px;
  background: #6c757d;
  color: #fff;
  font: inherit;
}

h2 {
  padding: 2px 7px 1px;
  font-size: 13px;
  line-height: 26px;
  font-weight: 500;
}

/* Application cards */
.cards {
  display: grid;
  grid-template-columns: repeat(3, 1fr);
  gap: 8px 1px;
  align-items: start;
}
.app-card {
  display: grid;
  grid-template-columns: 1fr 1fr;
  padding: 8px 0;
  border: 1px solid #dee2e6;
  border-radius: 13px;
}
.thumb { padding: 0 7px 0 15px; }
.thumb svg { display: block; width: 100%; height: 157px; }
.info {
  min-height: 174px;
  margin-right: 8px;
  border-left: 1px solid #dee2e6;
}
h3 {
  height: 50px;
  padding: 9px 16px;
  border-bottom: 1px solid #d3d7db;
  font-size: 10px;
  line-height: 20px;
}
.download {
  display: flex;
  align-items: center;
  gap: 4px;
  height: 40px;
  margin-top: 34px;
  padding: 0 16px;
  border-radius: 0 0 3px 3px;
  background: rgba(0, 0, 0, .03);
}
.download svg { width: 10px; height: 13px; }
.app-card--mid .thumb svg { height: 139px; }
.app-card--mid .info { min-height: 156px; }
.app-card--short .thumb svg { height: 117px; }
.app-card--short .info { min-height: 130px; }

/* Lettering inside the program previews */
.thumb text { white-space: pre; }
.thumb svg {
  font-family: "Liberation Sans", sans-serif;
  font-size: 4px;
  font-weight: 700;
}
.t3 { font-size: 3px; }
.t5 { font-size: 5px; }
.t6 { font-size: 6px; }
.t7 { font-size: 7px; }
.t8 { font-size: 8px; }
.t9 { font-size: 9px; }
.t10 { font-size: 10px; }
.t11 { font-size: 11px; }
.t12 { font-size: 12px; }
.t14 { font-size: 14px; }
.t16 { font-size: 16px; }
.mid { text-anchor: middle; }
.it { font-style: italic; }
.ul { text-decoration: underline; }
.thumb .reg { font-weight: 400; }
.thumb .bold { font-weight: 700; }
.serif { font-family: "Liberation Serif", serif; }
.dj { font-family: "DejaVu Sans", sans-serif; }
.thumb .os { font-family: "Open Sans", sans-serif; }

/* Footer */
.footer {
  min-height: 75px;
  padding: 11px;
  border-top: 1px solid #dee2e6;
  background: #fff;
  color: #869099;
  font-size: 11px;
}
.footer-row { display: flex; justify-content: space-between; }
```
